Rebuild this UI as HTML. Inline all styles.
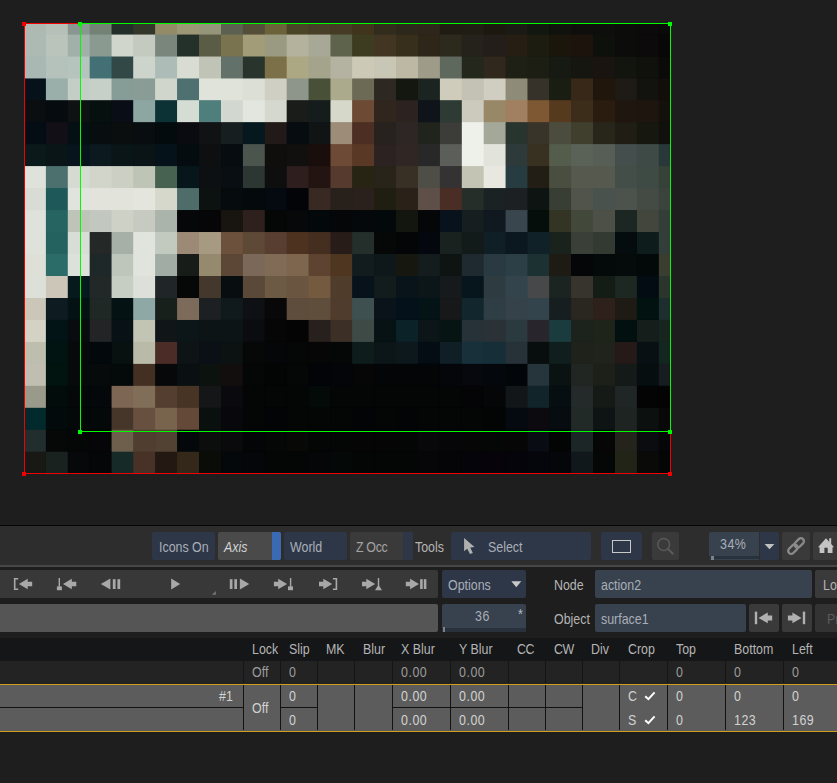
<!DOCTYPE html>
<html><head><meta charset="utf-8"><title>Action</title>
<style>
html,body{margin:0;padding:0;}
body{width:837px;height:783px;overflow:hidden;background:#1e1e1e;position:relative;font-family:"Liberation Sans",sans-serif;font-size:14.2px;color:#b4b4b4;}
.a{position:absolute;}
.t{position:absolute;white-space:nowrap;transform:scaleX(0.875);transform-origin:0 50%;line-height:16px;height:16px;margin-top:1.4px;}
.tr{transform-origin:100% 50%;text-align:right;}
.b{position:absolute;border-radius:2px;}
.blue{background:#2d3748;}
.slate{background:#37424e;}
.gray{background:#3a3a3a;}
svg{position:absolute;overflow:visible;}
</style></head><body>

<svg class="a" style="left:0;top:0" width="837" height="500" viewBox="0 0 837 500">
<g shape-rendering="crispEdges">
<rect x="24.0" y="23.5" width="22.5" height="11.6" fill="#adb9b1"/>
<rect x="45.9" y="23.5" width="22.5" height="11.6" fill="#b6c0b8"/>
<rect x="67.8" y="23.5" width="22.5" height="11.6" fill="#8a9690"/>
<rect x="89.7" y="23.5" width="22.5" height="11.6" fill="#748276"/>
<rect x="111.6" y="23.5" width="22.5" height="11.6" fill="#232e2b"/>
<rect x="133.4" y="23.5" width="22.5" height="11.6" fill="#33372a"/>
<rect x="155.3" y="23.5" width="22.5" height="11.6" fill="#928b66"/>
<rect x="177.2" y="23.5" width="22.5" height="11.6" fill="#9c9876"/>
<rect x="199.1" y="23.5" width="22.5" height="11.6" fill="#95957a"/>
<rect x="221.0" y="23.5" width="22.5" height="11.6" fill="#5b6050"/>
<rect x="242.9" y="23.5" width="22.5" height="11.6" fill="#544d38"/>
<rect x="264.8" y="23.5" width="22.5" height="11.6" fill="#6b623a"/>
<rect x="286.7" y="23.5" width="22.5" height="11.6" fill="#4a4526"/>
<rect x="308.6" y="23.5" width="22.5" height="11.6" fill="#483f28"/>
<rect x="330.5" y="23.5" width="22.5" height="11.6" fill="#463c26"/>
<rect x="352.4" y="23.5" width="22.5" height="11.6" fill="#40351c"/>
<rect x="374.2" y="23.5" width="22.5" height="11.6" fill="#312c1c"/>
<rect x="396.1" y="23.5" width="22.5" height="11.6" fill="#2c281c"/>
<rect x="418.0" y="23.5" width="22.5" height="11.6" fill="#2e261a"/>
<rect x="439.9" y="23.5" width="22.5" height="11.6" fill="#201c14"/>
<rect x="461.8" y="23.5" width="22.5" height="11.6" fill="#201e14"/>
<rect x="483.7" y="23.5" width="22.5" height="11.6" fill="#1c1810"/>
<rect x="505.6" y="23.5" width="22.5" height="11.6" fill="#1c1a14"/>
<rect x="527.5" y="23.5" width="22.5" height="11.6" fill="#121810"/>
<rect x="549.4" y="23.5" width="22.5" height="11.6" fill="#10120e"/>
<rect x="571.2" y="23.5" width="22.5" height="11.6" fill="#100e0c"/>
<rect x="593.1" y="23.5" width="22.5" height="11.6" fill="#0e0e0c"/>
<rect x="615.0" y="23.5" width="22.5" height="11.6" fill="#0c0c0a"/>
<rect x="636.9" y="23.5" width="22.5" height="11.6" fill="#0c0a0a"/>
<rect x="658.8" y="23.5" width="12.3" height="11.6" fill="#0a0a08"/>
<rect x="24.0" y="34.5" width="22.5" height="22.6" fill="#acbab3"/>
<rect x="45.9" y="34.5" width="22.5" height="22.6" fill="#bac4bb"/>
<rect x="67.8" y="34.5" width="22.5" height="22.6" fill="#a2b0aa"/>
<rect x="89.7" y="34.5" width="22.5" height="22.6" fill="#8a9a90"/>
<rect x="111.6" y="34.5" width="22.5" height="22.6" fill="#d0d6cc"/>
<rect x="133.4" y="34.5" width="22.5" height="22.6" fill="#c4cabf"/>
<rect x="155.3" y="34.5" width="22.5" height="22.6" fill="#7a867c"/>
<rect x="177.2" y="34.5" width="22.5" height="22.6" fill="#24302a"/>
<rect x="199.1" y="34.5" width="22.5" height="22.6" fill="#5a5c45"/>
<rect x="221.0" y="34.5" width="22.5" height="22.6" fill="#7a7350"/>
<rect x="242.9" y="34.5" width="22.5" height="22.6" fill="#a29c78"/>
<rect x="264.8" y="34.5" width="22.5" height="22.6" fill="#9a9a80"/>
<rect x="286.7" y="34.5" width="22.5" height="22.6" fill="#b4b29c"/>
<rect x="308.6" y="34.5" width="22.5" height="22.6" fill="#a8a896"/>
<rect x="330.5" y="34.5" width="22.5" height="22.6" fill="#5e644c"/>
<rect x="352.4" y="34.5" width="22.5" height="22.6" fill="#3e3c20"/>
<rect x="374.2" y="34.5" width="22.5" height="22.6" fill="#423622"/>
<rect x="396.1" y="34.5" width="22.5" height="22.6" fill="#382e1c"/>
<rect x="418.0" y="34.5" width="22.5" height="22.6" fill="#2e2618"/>
<rect x="439.9" y="34.5" width="22.5" height="22.6" fill="#2c2a1c"/>
<rect x="461.8" y="34.5" width="22.5" height="22.6" fill="#24221a"/>
<rect x="483.7" y="34.5" width="22.5" height="22.6" fill="#241e1a"/>
<rect x="505.6" y="34.5" width="22.5" height="22.6" fill="#261e12"/>
<rect x="527.5" y="34.5" width="22.5" height="22.6" fill="#1c1c10"/>
<rect x="549.4" y="34.5" width="22.5" height="22.6" fill="#1a160c"/>
<rect x="571.2" y="34.5" width="22.5" height="22.6" fill="#1c140c"/>
<rect x="593.1" y="34.5" width="22.5" height="22.6" fill="#0e100c"/>
<rect x="615.0" y="34.5" width="22.5" height="22.6" fill="#0c0c0a"/>
<rect x="636.9" y="34.5" width="22.5" height="22.6" fill="#0c0a0a"/>
<rect x="658.8" y="34.5" width="12.3" height="22.6" fill="#080808"/>
<rect x="24.0" y="56.5" width="22.5" height="22.6" fill="#a8b8b2"/>
<rect x="45.9" y="56.5" width="22.5" height="22.6" fill="#b4c2bb"/>
<rect x="67.8" y="56.5" width="22.5" height="22.6" fill="#b6c4be"/>
<rect x="89.7" y="56.5" width="22.5" height="22.6" fill="#427074"/>
<rect x="111.6" y="56.5" width="22.5" height="22.6" fill="#314846"/>
<rect x="133.4" y="56.5" width="22.5" height="22.6" fill="#ccd4cc"/>
<rect x="155.3" y="56.5" width="22.5" height="22.6" fill="#adbcb6"/>
<rect x="177.2" y="56.5" width="22.5" height="22.6" fill="#d8dcd2"/>
<rect x="199.1" y="56.5" width="22.5" height="22.6" fill="#c0c4b6"/>
<rect x="221.0" y="56.5" width="22.5" height="22.6" fill="#63716b"/>
<rect x="242.9" y="56.5" width="22.5" height="22.6" fill="#28342c"/>
<rect x="264.8" y="56.5" width="22.5" height="22.6" fill="#7c7048"/>
<rect x="286.7" y="56.5" width="22.5" height="22.6" fill="#aca884"/>
<rect x="308.6" y="56.5" width="22.5" height="22.6" fill="#a4a48c"/>
<rect x="330.5" y="56.5" width="22.5" height="22.6" fill="#b4b2a0"/>
<rect x="352.4" y="56.5" width="22.5" height="22.6" fill="#cccab6"/>
<rect x="374.2" y="56.5" width="22.5" height="22.6" fill="#c8c6b4"/>
<rect x="396.1" y="56.5" width="22.5" height="22.6" fill="#bcb8a4"/>
<rect x="418.0" y="56.5" width="22.5" height="22.6" fill="#9e9c88"/>
<rect x="439.9" y="56.5" width="22.5" height="22.6" fill="#5e685c"/>
<rect x="461.8" y="56.5" width="22.5" height="22.6" fill="#24281c"/>
<rect x="483.7" y="56.5" width="22.5" height="22.6" fill="#30281c"/>
<rect x="505.6" y="56.5" width="22.5" height="22.6" fill="#1e2016"/>
<rect x="527.5" y="56.5" width="22.5" height="22.6" fill="#1c1e14"/>
<rect x="549.4" y="56.5" width="22.5" height="22.6" fill="#161a12"/>
<rect x="571.2" y="56.5" width="22.5" height="22.6" fill="#161610"/>
<rect x="593.1" y="56.5" width="22.5" height="22.6" fill="#1a1410"/>
<rect x="615.0" y="56.5" width="22.5" height="22.6" fill="#12140e"/>
<rect x="636.9" y="56.5" width="22.5" height="22.6" fill="#10100c"/>
<rect x="658.8" y="56.5" width="12.3" height="22.6" fill="#0a0a08"/>
<rect x="24.0" y="78.5" width="22.5" height="22.6" fill="#06111a"/>
<rect x="45.9" y="78.5" width="22.5" height="22.6" fill="#9aaeaa"/>
<rect x="67.8" y="78.5" width="22.5" height="22.6" fill="#c4cec6"/>
<rect x="89.7" y="78.5" width="22.5" height="22.6" fill="#c6d0c8"/>
<rect x="111.6" y="78.5" width="22.5" height="22.6" fill="#869c96"/>
<rect x="133.4" y="78.5" width="22.5" height="22.6" fill="#8a9c96"/>
<rect x="155.3" y="78.5" width="22.5" height="22.6" fill="#d0d6cc"/>
<rect x="177.2" y="78.5" width="22.5" height="22.6" fill="#4f7070"/>
<rect x="199.1" y="78.5" width="22.5" height="22.6" fill="#dfe3da"/>
<rect x="221.0" y="78.5" width="22.5" height="22.6" fill="#dfe3da"/>
<rect x="242.9" y="78.5" width="22.5" height="22.6" fill="#dcdfd6"/>
<rect x="264.8" y="78.5" width="22.5" height="22.6" fill="#cfcfc4"/>
<rect x="286.7" y="78.5" width="22.5" height="22.6" fill="#8e968c"/>
<rect x="308.6" y="78.5" width="22.5" height="22.6" fill="#485038"/>
<rect x="330.5" y="78.5" width="22.5" height="22.6" fill="#acaa8c"/>
<rect x="352.4" y="78.5" width="22.5" height="22.6" fill="#6c6a54"/>
<rect x="374.2" y="78.5" width="22.5" height="22.6" fill="#2e2822"/>
<rect x="396.1" y="78.5" width="22.5" height="22.6" fill="#141610"/>
<rect x="418.0" y="78.5" width="22.5" height="22.6" fill="#1c2422"/>
<rect x="439.9" y="78.5" width="22.5" height="22.6" fill="#d0ccbc"/>
<rect x="461.8" y="78.5" width="22.5" height="22.6" fill="#c4c2b4"/>
<rect x="483.7" y="78.5" width="22.5" height="22.6" fill="#d0cec0"/>
<rect x="505.6" y="78.5" width="22.5" height="22.6" fill="#8e8c78"/>
<rect x="527.5" y="78.5" width="22.5" height="22.6" fill="#36322a"/>
<rect x="549.4" y="78.5" width="22.5" height="22.6" fill="#1a1e12"/>
<rect x="571.2" y="78.5" width="22.5" height="22.6" fill="#382818"/>
<rect x="593.1" y="78.5" width="22.5" height="22.6" fill="#20160c"/>
<rect x="615.0" y="78.5" width="22.5" height="22.6" fill="#1e1a16"/>
<rect x="636.9" y="78.5" width="22.5" height="22.6" fill="#12120e"/>
<rect x="658.8" y="78.5" width="12.3" height="22.6" fill="#120e0a"/>
<rect x="24.0" y="100.4" width="22.5" height="22.6" fill="#0b0e10"/>
<rect x="45.9" y="100.4" width="22.5" height="22.6" fill="#050b0e"/>
<rect x="67.8" y="100.4" width="22.5" height="22.6" fill="#0e1213"/>
<rect x="89.7" y="100.4" width="22.5" height="22.6" fill="#06100f"/>
<rect x="111.6" y="100.4" width="22.5" height="22.6" fill="#080d16"/>
<rect x="133.4" y="100.4" width="22.5" height="22.6" fill="#8ea6a2"/>
<rect x="155.3" y="100.4" width="22.5" height="22.6" fill="#0c3236"/>
<rect x="177.2" y="100.4" width="22.5" height="22.6" fill="#d4dcd4"/>
<rect x="199.1" y="100.4" width="22.5" height="22.6" fill="#4f7f7d"/>
<rect x="221.0" y="100.4" width="22.5" height="22.6" fill="#d2d8d0"/>
<rect x="242.9" y="100.4" width="22.5" height="22.6" fill="#e2e6de"/>
<rect x="264.8" y="100.4" width="22.5" height="22.6" fill="#d4d8ce"/>
<rect x="286.7" y="100.4" width="22.5" height="22.6" fill="#1a1c1a"/>
<rect x="308.6" y="100.4" width="22.5" height="22.6" fill="#141c1c"/>
<rect x="330.5" y="100.4" width="22.5" height="22.6" fill="#d6d8ca"/>
<rect x="352.4" y="100.4" width="22.5" height="22.6" fill="#6c4a34"/>
<rect x="374.2" y="100.4" width="22.5" height="22.6" fill="#30261e"/>
<rect x="396.1" y="100.4" width="22.5" height="22.6" fill="#2c2220"/>
<rect x="418.0" y="100.4" width="22.5" height="22.6" fill="#0e141a"/>
<rect x="439.9" y="100.4" width="22.5" height="22.6" fill="#2e3a34"/>
<rect x="461.8" y="100.4" width="22.5" height="22.6" fill="#cccabc"/>
<rect x="483.7" y="100.4" width="22.5" height="22.6" fill="#988868"/>
<rect x="505.6" y="100.4" width="22.5" height="22.6" fill="#a08060"/>
<rect x="527.5" y="100.4" width="22.5" height="22.6" fill="#7e5832"/>
<rect x="549.4" y="100.4" width="22.5" height="22.6" fill="#563a1e"/>
<rect x="571.2" y="100.4" width="22.5" height="22.6" fill="#3c2c1a"/>
<rect x="593.1" y="100.4" width="22.5" height="22.6" fill="#2a1c0e"/>
<rect x="615.0" y="100.4" width="22.5" height="22.6" fill="#201610"/>
<rect x="636.9" y="100.4" width="22.5" height="22.6" fill="#1e160e"/>
<rect x="658.8" y="100.4" width="12.3" height="22.6" fill="#14100c"/>
<rect x="24.0" y="122.4" width="22.5" height="22.6" fill="#040c14"/>
<rect x="45.9" y="122.4" width="22.5" height="22.6" fill="#121016"/>
<rect x="67.8" y="122.4" width="22.5" height="22.6" fill="#051014"/>
<rect x="89.7" y="122.4" width="22.5" height="22.6" fill="#080e0f"/>
<rect x="111.6" y="122.4" width="22.5" height="22.6" fill="#0a0e0f"/>
<rect x="133.4" y="122.4" width="22.5" height="22.6" fill="#080e10"/>
<rect x="155.3" y="122.4" width="22.5" height="22.6" fill="#040b0d"/>
<rect x="177.2" y="122.4" width="22.5" height="22.6" fill="#0a0b10"/>
<rect x="199.1" y="122.4" width="22.5" height="22.6" fill="#111214"/>
<rect x="221.0" y="122.4" width="22.5" height="22.6" fill="#161e20"/>
<rect x="242.9" y="122.4" width="22.5" height="22.6" fill="#04181e"/>
<rect x="264.8" y="122.4" width="22.5" height="22.6" fill="#221a18"/>
<rect x="286.7" y="122.4" width="22.5" height="22.6" fill="#060c10"/>
<rect x="308.6" y="122.4" width="22.5" height="22.6" fill="#101414"/>
<rect x="330.5" y="122.4" width="22.5" height="22.6" fill="#9c8c78"/>
<rect x="352.4" y="122.4" width="22.5" height="22.6" fill="#4c2e22"/>
<rect x="374.2" y="122.4" width="22.5" height="22.6" fill="#28221e"/>
<rect x="396.1" y="122.4" width="22.5" height="22.6" fill="#2e2624"/>
<rect x="418.0" y="122.4" width="22.5" height="22.6" fill="#20241c"/>
<rect x="439.9" y="122.4" width="22.5" height="22.6" fill="#3c3c38"/>
<rect x="461.8" y="122.4" width="22.5" height="22.6" fill="#eef0ea"/>
<rect x="483.7" y="122.4" width="22.5" height="22.6" fill="#a4a898"/>
<rect x="505.6" y="122.4" width="22.5" height="22.6" fill="#28342e"/>
<rect x="527.5" y="122.4" width="22.5" height="22.6" fill="#38342a"/>
<rect x="549.4" y="122.4" width="22.5" height="22.6" fill="#4c4c3e"/>
<rect x="571.2" y="122.4" width="22.5" height="22.6" fill="#403e2c"/>
<rect x="593.1" y="122.4" width="22.5" height="22.6" fill="#28261a"/>
<rect x="615.0" y="122.4" width="22.5" height="22.6" fill="#201e14"/>
<rect x="636.9" y="122.4" width="22.5" height="22.6" fill="#161810"/>
<rect x="658.8" y="122.4" width="12.3" height="22.6" fill="#10100c"/>
<rect x="24.0" y="144.3" width="22.5" height="22.6" fill="#0a1a1a"/>
<rect x="45.9" y="144.3" width="22.5" height="22.6" fill="#0a1518"/>
<rect x="67.8" y="144.3" width="22.5" height="22.6" fill="#08141c"/>
<rect x="89.7" y="144.3" width="22.5" height="22.6" fill="#0c1a20"/>
<rect x="111.6" y="144.3" width="22.5" height="22.6" fill="#0a1518"/>
<rect x="133.4" y="144.3" width="22.5" height="22.6" fill="#0a1416"/>
<rect x="155.3" y="144.3" width="22.5" height="22.6" fill="#06121a"/>
<rect x="177.2" y="144.3" width="22.5" height="22.6" fill="#040c10"/>
<rect x="199.1" y="144.3" width="22.5" height="22.6" fill="#0e0f10"/>
<rect x="221.0" y="144.3" width="22.5" height="22.6" fill="#060c10"/>
<rect x="242.9" y="144.3" width="22.5" height="22.6" fill="#4c544e"/>
<rect x="264.8" y="144.3" width="22.5" height="22.6" fill="#100e0c"/>
<rect x="286.7" y="144.3" width="22.5" height="22.6" fill="#12100e"/>
<rect x="308.6" y="144.3" width="22.5" height="22.6" fill="#1a0e0c"/>
<rect x="330.5" y="144.3" width="22.5" height="22.6" fill="#6c4a36"/>
<rect x="352.4" y="144.3" width="22.5" height="22.6" fill="#5a3826"/>
<rect x="374.2" y="144.3" width="22.5" height="22.6" fill="#2c2222"/>
<rect x="396.1" y="144.3" width="22.5" height="22.6" fill="#302624"/>
<rect x="418.0" y="144.3" width="22.5" height="22.6" fill="#282828"/>
<rect x="439.9" y="144.3" width="22.5" height="22.6" fill="#5c5e5a"/>
<rect x="461.8" y="144.3" width="22.5" height="22.6" fill="#eef0ea"/>
<rect x="483.7" y="144.3" width="22.5" height="22.6" fill="#e2e4dc"/>
<rect x="505.6" y="144.3" width="22.5" height="22.6" fill="#2e3a3a"/>
<rect x="527.5" y="144.3" width="22.5" height="22.6" fill="#383020"/>
<rect x="549.4" y="144.3" width="22.5" height="22.6" fill="#545c4c"/>
<rect x="571.2" y="144.3" width="22.5" height="22.6" fill="#5a6258"/>
<rect x="593.1" y="144.3" width="22.5" height="22.6" fill="#565e56"/>
<rect x="615.0" y="144.3" width="22.5" height="22.6" fill="#444e4c"/>
<rect x="636.9" y="144.3" width="22.5" height="22.6" fill="#3e4a46"/>
<rect x="658.8" y="144.3" width="12.3" height="22.6" fill="#283838"/>
<rect x="24.0" y="166.3" width="22.5" height="22.6" fill="#dee2da"/>
<rect x="45.9" y="166.3" width="22.5" height="22.6" fill="#4c706e"/>
<rect x="67.8" y="166.3" width="22.5" height="22.6" fill="#d6dbd2"/>
<rect x="89.7" y="166.3" width="22.5" height="22.6" fill="#d2d6ca"/>
<rect x="111.6" y="166.3" width="22.5" height="22.6" fill="#ccd0c4"/>
<rect x="133.4" y="166.3" width="22.5" height="22.6" fill="#bec4b6"/>
<rect x="155.3" y="166.3" width="22.5" height="22.6" fill="#486252"/>
<rect x="177.2" y="166.3" width="22.5" height="22.6" fill="#06161a"/>
<rect x="199.1" y="166.3" width="22.5" height="22.6" fill="#0c1012"/>
<rect x="221.0" y="166.3" width="22.5" height="22.6" fill="#080e12"/>
<rect x="242.9" y="166.3" width="22.5" height="22.6" fill="#2c3632"/>
<rect x="264.8" y="166.3" width="22.5" height="22.6" fill="#0e0e0e"/>
<rect x="286.7" y="166.3" width="22.5" height="22.6" fill="#2e1e1e"/>
<rect x="308.6" y="166.3" width="22.5" height="22.6" fill="#221410"/>
<rect x="330.5" y="166.3" width="22.5" height="22.6" fill="#563a2e"/>
<rect x="352.4" y="166.3" width="22.5" height="22.6" fill="#282414"/>
<rect x="374.2" y="166.3" width="22.5" height="22.6" fill="#28241a"/>
<rect x="396.1" y="166.3" width="22.5" height="22.6" fill="#383024"/>
<rect x="418.0" y="166.3" width="22.5" height="22.6" fill="#4e4e46"/>
<rect x="439.9" y="166.3" width="22.5" height="22.6" fill="#343232"/>
<rect x="461.8" y="166.3" width="22.5" height="22.6" fill="#c4c4b4"/>
<rect x="483.7" y="166.3" width="22.5" height="22.6" fill="#e8e8e0"/>
<rect x="505.6" y="166.3" width="22.5" height="22.6" fill="#263c40"/>
<rect x="527.5" y="166.3" width="22.5" height="22.6" fill="#221e16"/>
<rect x="549.4" y="166.3" width="22.5" height="22.6" fill="#4a4e40"/>
<rect x="571.2" y="166.3" width="22.5" height="22.6" fill="#565a4e"/>
<rect x="593.1" y="166.3" width="22.5" height="22.6" fill="#565a4e"/>
<rect x="615.0" y="166.3" width="22.5" height="22.6" fill="#444e48"/>
<rect x="636.9" y="166.3" width="22.5" height="22.6" fill="#3e4a44"/>
<rect x="658.8" y="166.3" width="12.3" height="22.6" fill="#364238"/>
<rect x="24.0" y="188.2" width="22.5" height="22.6" fill="#d8dcd4"/>
<rect x="45.9" y="188.2" width="22.5" height="22.6" fill="#1e5858"/>
<rect x="67.8" y="188.2" width="22.5" height="22.6" fill="#e0e4dc"/>
<rect x="89.7" y="188.2" width="22.5" height="22.6" fill="#e2e4dc"/>
<rect x="111.6" y="188.2" width="22.5" height="22.6" fill="#e2e4dc"/>
<rect x="133.4" y="188.2" width="22.5" height="22.6" fill="#e4e6de"/>
<rect x="155.3" y="188.2" width="22.5" height="22.6" fill="#d6d8cc"/>
<rect x="177.2" y="188.2" width="22.5" height="22.6" fill="#4e6c6a"/>
<rect x="199.1" y="188.2" width="22.5" height="22.6" fill="#0c1210"/>
<rect x="221.0" y="188.2" width="22.5" height="22.6" fill="#060c0e"/>
<rect x="242.9" y="188.2" width="22.5" height="22.6" fill="#040a0c"/>
<rect x="264.8" y="188.2" width="22.5" height="22.6" fill="#040a10"/>
<rect x="286.7" y="188.2" width="22.5" height="22.6" fill="#020408"/>
<rect x="308.6" y="188.2" width="22.5" height="22.6" fill="#382a22"/>
<rect x="330.5" y="188.2" width="22.5" height="22.6" fill="#28201a"/>
<rect x="352.4" y="188.2" width="22.5" height="22.6" fill="#2a201c"/>
<rect x="374.2" y="188.2" width="22.5" height="22.6" fill="#201e10"/>
<rect x="396.1" y="188.2" width="22.5" height="22.6" fill="#2a2218"/>
<rect x="418.0" y="188.2" width="22.5" height="22.6" fill="#5e5048"/>
<rect x="439.9" y="188.2" width="22.5" height="22.6" fill="#4a2e26"/>
<rect x="461.8" y="188.2" width="22.5" height="22.6" fill="#262e2a"/>
<rect x="483.7" y="188.2" width="22.5" height="22.6" fill="#1a2224"/>
<rect x="505.6" y="188.2" width="22.5" height="22.6" fill="#1c2022"/>
<rect x="527.5" y="188.2" width="22.5" height="22.6" fill="#0e1412"/>
<rect x="549.4" y="188.2" width="22.5" height="22.6" fill="#383e34"/>
<rect x="571.2" y="188.2" width="22.5" height="22.6" fill="#50544a"/>
<rect x="593.1" y="188.2" width="22.5" height="22.6" fill="#4a524e"/>
<rect x="615.0" y="188.2" width="22.5" height="22.6" fill="#4c524c"/>
<rect x="636.9" y="188.2" width="22.5" height="22.6" fill="#444a44"/>
<rect x="658.8" y="188.2" width="12.3" height="22.6" fill="#3a443c"/>
<rect x="24.0" y="210.2" width="22.5" height="22.6" fill="#dee2da"/>
<rect x="45.9" y="210.2" width="22.5" height="22.6" fill="#266462"/>
<rect x="67.8" y="210.2" width="22.5" height="22.6" fill="#bec4b8"/>
<rect x="89.7" y="210.2" width="22.5" height="22.6" fill="#c2c8c0"/>
<rect x="111.6" y="210.2" width="22.5" height="22.6" fill="#ced2c6"/>
<rect x="133.4" y="210.2" width="22.5" height="22.6" fill="#c6cac0"/>
<rect x="155.3" y="210.2" width="22.5" height="22.6" fill="#aab4aa"/>
<rect x="177.2" y="210.2" width="22.5" height="22.6" fill="#050708"/>
<rect x="199.1" y="210.2" width="22.5" height="22.6" fill="#060608"/>
<rect x="221.0" y="210.2" width="22.5" height="22.6" fill="#181410"/>
<rect x="242.9" y="210.2" width="22.5" height="22.6" fill="#2e201c"/>
<rect x="264.8" y="210.2" width="22.5" height="22.6" fill="#050706"/>
<rect x="286.7" y="210.2" width="22.5" height="22.6" fill="#06080a"/>
<rect x="308.6" y="210.2" width="22.5" height="22.6" fill="#03080a"/>
<rect x="330.5" y="210.2" width="22.5" height="22.6" fill="#040608"/>
<rect x="352.4" y="210.2" width="22.5" height="22.6" fill="#04080a"/>
<rect x="374.2" y="210.2" width="22.5" height="22.6" fill="#03080a"/>
<rect x="396.1" y="210.2" width="22.5" height="22.6" fill="#12160e"/>
<rect x="418.0" y="210.2" width="22.5" height="22.6" fill="#050608"/>
<rect x="439.9" y="210.2" width="22.5" height="22.6" fill="#08121c"/>
<rect x="461.8" y="210.2" width="22.5" height="22.6" fill="#161e20"/>
<rect x="483.7" y="210.2" width="22.5" height="22.6" fill="#101820"/>
<rect x="505.6" y="210.2" width="22.5" height="22.6" fill="#3a464e"/>
<rect x="527.5" y="210.2" width="22.5" height="22.6" fill="#060e0c"/>
<rect x="549.4" y="210.2" width="22.5" height="22.6" fill="#343424"/>
<rect x="571.2" y="210.2" width="22.5" height="22.6" fill="#42483a"/>
<rect x="593.1" y="210.2" width="22.5" height="22.6" fill="#4c5046"/>
<rect x="615.0" y="210.2" width="22.5" height="22.6" fill="#1c2622"/>
<rect x="636.9" y="210.2" width="22.5" height="22.6" fill="#42463c"/>
<rect x="658.8" y="210.2" width="12.3" height="22.6" fill="#343e38"/>
<rect x="24.0" y="232.2" width="22.5" height="22.6" fill="#dee2da"/>
<rect x="45.9" y="232.2" width="22.5" height="22.6" fill="#246260"/>
<rect x="67.8" y="232.2" width="22.5" height="22.6" fill="#d8ded6"/>
<rect x="89.7" y="232.2" width="22.5" height="22.6" fill="#242826"/>
<rect x="111.6" y="232.2" width="22.5" height="22.6" fill="#a6b0a6"/>
<rect x="133.4" y="232.2" width="22.5" height="22.6" fill="#e0e4dc"/>
<rect x="155.3" y="232.2" width="22.5" height="22.6" fill="#c2cac0"/>
<rect x="177.2" y="232.2" width="22.5" height="22.6" fill="#9c8a76"/>
<rect x="199.1" y="232.2" width="22.5" height="22.6" fill="#a69a82"/>
<rect x="221.0" y="232.2" width="22.5" height="22.6" fill="#6c523c"/>
<rect x="242.9" y="232.2" width="22.5" height="22.6" fill="#5e4836"/>
<rect x="264.8" y="232.2" width="22.5" height="22.6" fill="#583e30"/>
<rect x="286.7" y="232.2" width="22.5" height="22.6" fill="#4e3220"/>
<rect x="308.6" y="232.2" width="22.5" height="22.6" fill="#442e20"/>
<rect x="330.5" y="232.2" width="22.5" height="22.6" fill="#281c18"/>
<rect x="352.4" y="232.2" width="22.5" height="22.6" fill="#242e2a"/>
<rect x="374.2" y="232.2" width="22.5" height="22.6" fill="#060808"/>
<rect x="396.1" y="232.2" width="22.5" height="22.6" fill="#030506"/>
<rect x="418.0" y="232.2" width="22.5" height="22.6" fill="#04080e"/>
<rect x="439.9" y="232.2" width="22.5" height="22.6" fill="#1a2220"/>
<rect x="461.8" y="232.2" width="22.5" height="22.6" fill="#121a1a"/>
<rect x="483.7" y="232.2" width="22.5" height="22.6" fill="#101e26"/>
<rect x="505.6" y="232.2" width="22.5" height="22.6" fill="#0c1820"/>
<rect x="527.5" y="232.2" width="22.5" height="22.6" fill="#102228"/>
<rect x="549.4" y="232.2" width="22.5" height="22.6" fill="#1a221e"/>
<rect x="571.2" y="232.2" width="22.5" height="22.6" fill="#3a4038"/>
<rect x="593.1" y="232.2" width="22.5" height="22.6" fill="#323a32"/>
<rect x="615.0" y="232.2" width="22.5" height="22.6" fill="#040c0e"/>
<rect x="636.9" y="232.2" width="22.5" height="22.6" fill="#0e1c1c"/>
<rect x="658.8" y="232.2" width="12.3" height="22.6" fill="#323e3a"/>
<rect x="24.0" y="254.1" width="22.5" height="22.6" fill="#dee0d8"/>
<rect x="45.9" y="254.1" width="22.5" height="22.6" fill="#2c6c68"/>
<rect x="67.8" y="254.1" width="22.5" height="22.6" fill="#dce2da"/>
<rect x="89.7" y="254.1" width="22.5" height="22.6" fill="#1e2828"/>
<rect x="111.6" y="254.1" width="22.5" height="22.6" fill="#bec6bc"/>
<rect x="133.4" y="254.1" width="22.5" height="22.6" fill="#e0e4dc"/>
<rect x="155.3" y="254.1" width="22.5" height="22.6" fill="#a0aca4"/>
<rect x="177.2" y="254.1" width="22.5" height="22.6" fill="#181c18"/>
<rect x="199.1" y="254.1" width="22.5" height="22.6" fill="#968a6e"/>
<rect x="221.0" y="254.1" width="22.5" height="22.6" fill="#5c4636"/>
<rect x="242.9" y="254.1" width="22.5" height="22.6" fill="#7c6858"/>
<rect x="264.8" y="254.1" width="22.5" height="22.6" fill="#806c56"/>
<rect x="286.7" y="254.1" width="22.5" height="22.6" fill="#7e664e"/>
<rect x="308.6" y="254.1" width="22.5" height="22.6" fill="#5e4430"/>
<rect x="330.5" y="254.1" width="22.5" height="22.6" fill="#4e3620"/>
<rect x="352.4" y="254.1" width="22.5" height="22.6" fill="#121c1e"/>
<rect x="374.2" y="254.1" width="22.5" height="22.6" fill="#0e181a"/>
<rect x="396.1" y="254.1" width="22.5" height="22.6" fill="#161810"/>
<rect x="418.0" y="254.1" width="22.5" height="22.6" fill="#141c1e"/>
<rect x="439.9" y="254.1" width="22.5" height="22.6" fill="#0e1412"/>
<rect x="461.8" y="254.1" width="22.5" height="22.6" fill="#1e2a30"/>
<rect x="483.7" y="254.1" width="22.5" height="22.6" fill="#2a3a42"/>
<rect x="505.6" y="254.1" width="22.5" height="22.6" fill="#2c3e46"/>
<rect x="527.5" y="254.1" width="22.5" height="22.6" fill="#1c3232"/>
<rect x="549.4" y="254.1" width="22.5" height="22.6" fill="#1e1a14"/>
<rect x="571.2" y="254.1" width="22.5" height="22.6" fill="#040608"/>
<rect x="593.1" y="254.1" width="22.5" height="22.6" fill="#040a0a"/>
<rect x="615.0" y="254.1" width="22.5" height="22.6" fill="#050b0a"/>
<rect x="636.9" y="254.1" width="22.5" height="22.6" fill="#030809"/>
<rect x="658.8" y="254.1" width="12.3" height="22.6" fill="#3a3e30"/>
<rect x="24.0" y="276.1" width="22.5" height="22.6" fill="#dde0d8"/>
<rect x="45.9" y="276.1" width="22.5" height="22.6" fill="#ccc6b8"/>
<rect x="67.8" y="276.1" width="22.5" height="22.6" fill="#061a1e"/>
<rect x="89.7" y="276.1" width="22.5" height="22.6" fill="#222828"/>
<rect x="111.6" y="276.1" width="22.5" height="22.6" fill="#c6cec4"/>
<rect x="133.4" y="276.1" width="22.5" height="22.6" fill="#dce0d8"/>
<rect x="155.3" y="276.1" width="22.5" height="22.6" fill="#202628"/>
<rect x="177.2" y="276.1" width="22.5" height="22.6" fill="#060808"/>
<rect x="199.1" y="276.1" width="22.5" height="22.6" fill="#44382c"/>
<rect x="221.0" y="276.1" width="22.5" height="22.6" fill="#080e10"/>
<rect x="242.9" y="276.1" width="22.5" height="22.6" fill="#5a4838"/>
<rect x="264.8" y="276.1" width="22.5" height="22.6" fill="#6c5a44"/>
<rect x="286.7" y="276.1" width="22.5" height="22.6" fill="#6a5640"/>
<rect x="308.6" y="276.1" width="22.5" height="22.6" fill="#745a3e"/>
<rect x="330.5" y="276.1" width="22.5" height="22.6" fill="#503c2a"/>
<rect x="352.4" y="276.1" width="22.5" height="22.6" fill="#08121a"/>
<rect x="374.2" y="276.1" width="22.5" height="22.6" fill="#121c1c"/>
<rect x="396.1" y="276.1" width="22.5" height="22.6" fill="#08141a"/>
<rect x="418.0" y="276.1" width="22.5" height="22.6" fill="#0c1618"/>
<rect x="439.9" y="276.1" width="22.5" height="22.6" fill="#161a1c"/>
<rect x="461.8" y="276.1" width="22.5" height="22.6" fill="#06161c"/>
<rect x="483.7" y="276.1" width="22.5" height="22.6" fill="#2e3c42"/>
<rect x="505.6" y="276.1" width="22.5" height="22.6" fill="#34444c"/>
<rect x="527.5" y="276.1" width="22.5" height="22.6" fill="#46484a"/>
<rect x="549.4" y="276.1" width="22.5" height="22.6" fill="#1c2422"/>
<rect x="571.2" y="276.1" width="22.5" height="22.6" fill="#36342c"/>
<rect x="593.1" y="276.1" width="22.5" height="22.6" fill="#141c16"/>
<rect x="615.0" y="276.1" width="22.5" height="22.6" fill="#1e2822"/>
<rect x="636.9" y="276.1" width="22.5" height="22.6" fill="#030c12"/>
<rect x="658.8" y="276.1" width="12.3" height="22.6" fill="#2a362c"/>
<rect x="24.0" y="298.0" width="22.5" height="22.6" fill="#cac6b8"/>
<rect x="45.9" y="298.0" width="22.5" height="22.6" fill="#0e1c22"/>
<rect x="67.8" y="298.0" width="22.5" height="22.6" fill="#041214"/>
<rect x="89.7" y="298.0" width="22.5" height="22.6" fill="#202826"/>
<rect x="111.6" y="298.0" width="22.5" height="22.6" fill="#041214"/>
<rect x="133.4" y="298.0" width="22.5" height="22.6" fill="#8ea8a6"/>
<rect x="155.3" y="298.0" width="22.5" height="22.6" fill="#18201c"/>
<rect x="177.2" y="298.0" width="22.5" height="22.6" fill="#7c6a5a"/>
<rect x="199.1" y="298.0" width="22.5" height="22.6" fill="#1c2022"/>
<rect x="221.0" y="298.0" width="22.5" height="22.6" fill="#101a1c"/>
<rect x="242.9" y="298.0" width="22.5" height="22.6" fill="#0e1014"/>
<rect x="264.8" y="298.0" width="22.5" height="22.6" fill="#080808"/>
<rect x="286.7" y="298.0" width="22.5" height="22.6" fill="#5e4c3c"/>
<rect x="308.6" y="298.0" width="22.5" height="22.6" fill="#604e3c"/>
<rect x="330.5" y="298.0" width="22.5" height="22.6" fill="#503c2c"/>
<rect x="352.4" y="298.0" width="22.5" height="22.6" fill="#3e5050"/>
<rect x="374.2" y="298.0" width="22.5" height="22.6" fill="#0a121a"/>
<rect x="396.1" y="298.0" width="22.5" height="22.6" fill="#04101a"/>
<rect x="418.0" y="298.0" width="22.5" height="22.6" fill="#041416"/>
<rect x="439.9" y="298.0" width="22.5" height="22.6" fill="#16181a"/>
<rect x="461.8" y="298.0" width="22.5" height="22.6" fill="#12262e"/>
<rect x="483.7" y="298.0" width="22.5" height="22.6" fill="#2e3e44"/>
<rect x="505.6" y="298.0" width="22.5" height="22.6" fill="#36424a"/>
<rect x="527.5" y="298.0" width="22.5" height="22.6" fill="#34444c"/>
<rect x="549.4" y="298.0" width="22.5" height="22.6" fill="#161e20"/>
<rect x="571.2" y="298.0" width="22.5" height="22.6" fill="#2a2620"/>
<rect x="593.1" y="298.0" width="22.5" height="22.6" fill="#2e201a"/>
<rect x="615.0" y="298.0" width="22.5" height="22.6" fill="#1e1a14"/>
<rect x="636.9" y="298.0" width="22.5" height="22.6" fill="#021210"/>
<rect x="658.8" y="298.0" width="12.3" height="22.6" fill="#1e2e2e"/>
<rect x="24.0" y="320.0" width="22.5" height="22.6" fill="#d4d2c4"/>
<rect x="45.9" y="320.0" width="22.5" height="22.6" fill="#021416"/>
<rect x="67.8" y="320.0" width="22.5" height="22.6" fill="#080c0e"/>
<rect x="89.7" y="320.0" width="22.5" height="22.6" fill="#222426"/>
<rect x="111.6" y="320.0" width="22.5" height="22.6" fill="#081216"/>
<rect x="133.4" y="320.0" width="22.5" height="22.6" fill="#c2c4b4"/>
<rect x="155.3" y="320.0" width="22.5" height="22.6" fill="#101618"/>
<rect x="177.2" y="320.0" width="22.5" height="22.6" fill="#0c1618"/>
<rect x="199.1" y="320.0" width="22.5" height="22.6" fill="#0c1416"/>
<rect x="221.0" y="320.0" width="22.5" height="22.6" fill="#0c1416"/>
<rect x="242.9" y="320.0" width="22.5" height="22.6" fill="#0a0c10"/>
<rect x="264.8" y="320.0" width="22.5" height="22.6" fill="#060606"/>
<rect x="286.7" y="320.0" width="22.5" height="22.6" fill="#040404"/>
<rect x="308.6" y="320.0" width="22.5" height="22.6" fill="#28201c"/>
<rect x="330.5" y="320.0" width="22.5" height="22.6" fill="#3c3026"/>
<rect x="352.4" y="320.0" width="22.5" height="22.6" fill="#3e4a46"/>
<rect x="374.2" y="320.0" width="22.5" height="22.6" fill="#061214"/>
<rect x="396.1" y="320.0" width="22.5" height="22.6" fill="#0a2228"/>
<rect x="418.0" y="320.0" width="22.5" height="22.6" fill="#0c1618"/>
<rect x="439.9" y="320.0" width="22.5" height="22.6" fill="#061414"/>
<rect x="461.8" y="320.0" width="22.5" height="22.6" fill="#263238"/>
<rect x="483.7" y="320.0" width="22.5" height="22.6" fill="#2a3238"/>
<rect x="505.6" y="320.0" width="22.5" height="22.6" fill="#2a3a3e"/>
<rect x="527.5" y="320.0" width="22.5" height="22.6" fill="#28262c"/>
<rect x="549.4" y="320.0" width="22.5" height="22.6" fill="#1a3c3e"/>
<rect x="571.2" y="320.0" width="22.5" height="22.6" fill="#1c221c"/>
<rect x="593.1" y="320.0" width="22.5" height="22.6" fill="#1e241a"/>
<rect x="615.0" y="320.0" width="22.5" height="22.6" fill="#021010"/>
<rect x="636.9" y="320.0" width="22.5" height="22.6" fill="#161e1c"/>
<rect x="658.8" y="320.0" width="12.3" height="22.6" fill="#16261e"/>
<rect x="24.0" y="341.9" width="22.5" height="22.6" fill="#bebeae"/>
<rect x="45.9" y="341.9" width="22.5" height="22.6" fill="#021412"/>
<rect x="67.8" y="341.9" width="22.5" height="22.6" fill="#060a0a"/>
<rect x="89.7" y="341.9" width="22.5" height="22.6" fill="#02080c"/>
<rect x="111.6" y="341.9" width="22.5" height="22.6" fill="#081010"/>
<rect x="133.4" y="341.9" width="22.5" height="22.6" fill="#babaa8"/>
<rect x="155.3" y="341.9" width="22.5" height="22.6" fill="#4c2c26"/>
<rect x="177.2" y="341.9" width="22.5" height="22.6" fill="#0e1416"/>
<rect x="199.1" y="341.9" width="22.5" height="22.6" fill="#0a1016"/>
<rect x="221.0" y="341.9" width="22.5" height="22.6" fill="#0c1212"/>
<rect x="242.9" y="341.9" width="22.5" height="22.6" fill="#060808"/>
<rect x="264.8" y="341.9" width="22.5" height="22.6" fill="#040608"/>
<rect x="286.7" y="341.9" width="22.5" height="22.6" fill="#050606"/>
<rect x="308.6" y="341.9" width="22.5" height="22.6" fill="#060606"/>
<rect x="330.5" y="341.9" width="22.5" height="22.6" fill="#050606"/>
<rect x="352.4" y="341.9" width="22.5" height="22.6" fill="#0e1c1c"/>
<rect x="374.2" y="341.9" width="22.5" height="22.6" fill="#0c1618"/>
<rect x="396.1" y="341.9" width="22.5" height="22.6" fill="#0c181c"/>
<rect x="418.0" y="341.9" width="22.5" height="22.6" fill="#040c14"/>
<rect x="439.9" y="341.9" width="22.5" height="22.6" fill="#101e26"/>
<rect x="461.8" y="341.9" width="22.5" height="22.6" fill="#18303a"/>
<rect x="483.7" y="341.9" width="22.5" height="22.6" fill="#162e38"/>
<rect x="505.6" y="341.9" width="22.5" height="22.6" fill="#263238"/>
<rect x="527.5" y="341.9" width="22.5" height="22.6" fill="#080e0e"/>
<rect x="549.4" y="341.9" width="22.5" height="22.6" fill="#101e1e"/>
<rect x="571.2" y="341.9" width="22.5" height="22.6" fill="#1e221a"/>
<rect x="593.1" y="341.9" width="22.5" height="22.6" fill="#20221c"/>
<rect x="615.0" y="341.9" width="22.5" height="22.6" fill="#261a18"/>
<rect x="636.9" y="341.9" width="22.5" height="22.6" fill="#081014"/>
<rect x="658.8" y="341.9" width="12.3" height="22.6" fill="#142620"/>
<rect x="24.0" y="363.9" width="22.5" height="22.6" fill="#c0beb0"/>
<rect x="45.9" y="363.9" width="22.5" height="22.6" fill="#021410"/>
<rect x="67.8" y="363.9" width="22.5" height="22.6" fill="#060a0a"/>
<rect x="89.7" y="363.9" width="22.5" height="22.6" fill="#060a0a"/>
<rect x="111.6" y="363.9" width="22.5" height="22.6" fill="#040a0a"/>
<rect x="133.4" y="363.9" width="22.5" height="22.6" fill="#443022"/>
<rect x="155.3" y="363.9" width="22.5" height="22.6" fill="#06080a"/>
<rect x="177.2" y="363.9" width="22.5" height="22.6" fill="#0a1012"/>
<rect x="199.1" y="363.9" width="22.5" height="22.6" fill="#0c120e"/>
<rect x="221.0" y="363.9" width="22.5" height="22.6" fill="#120e0e"/>
<rect x="242.9" y="363.9" width="22.5" height="22.6" fill="#050706"/>
<rect x="264.8" y="363.9" width="22.5" height="22.6" fill="#030404"/>
<rect x="286.7" y="363.9" width="22.5" height="22.6" fill="#050606"/>
<rect x="308.6" y="363.9" width="22.5" height="22.6" fill="#020408"/>
<rect x="330.5" y="363.9" width="22.5" height="22.6" fill="#030508"/>
<rect x="352.4" y="363.9" width="22.5" height="22.6" fill="#060606"/>
<rect x="374.2" y="363.9" width="22.5" height="22.6" fill="#040506"/>
<rect x="396.1" y="363.9" width="22.5" height="22.6" fill="#040506"/>
<rect x="418.0" y="363.9" width="22.5" height="22.6" fill="#040506"/>
<rect x="439.9" y="363.9" width="22.5" height="22.6" fill="#04060a"/>
<rect x="461.8" y="363.9" width="22.5" height="22.6" fill="#06080e"/>
<rect x="483.7" y="363.9" width="22.5" height="22.6" fill="#04080c"/>
<rect x="505.6" y="363.9" width="22.5" height="22.6" fill="#020608"/>
<rect x="527.5" y="363.9" width="22.5" height="22.6" fill="#26343c"/>
<rect x="549.4" y="363.9" width="22.5" height="22.6" fill="#0a1212"/>
<rect x="571.2" y="363.9" width="22.5" height="22.6" fill="#222622"/>
<rect x="593.1" y="363.9" width="22.5" height="22.6" fill="#1c2018"/>
<rect x="615.0" y="363.9" width="22.5" height="22.6" fill="#141a18"/>
<rect x="636.9" y="363.9" width="22.5" height="22.6" fill="#060e10"/>
<rect x="658.8" y="363.9" width="12.3" height="22.6" fill="#161c20"/>
<rect x="24.0" y="385.8" width="22.5" height="22.6" fill="#9a9a8a"/>
<rect x="45.9" y="385.8" width="22.5" height="22.6" fill="#020c0a"/>
<rect x="67.8" y="385.8" width="22.5" height="22.6" fill="#040808"/>
<rect x="89.7" y="385.8" width="22.5" height="22.6" fill="#04080a"/>
<rect x="111.6" y="385.8" width="22.5" height="22.6" fill="#7e6654"/>
<rect x="133.4" y="385.8" width="22.5" height="22.6" fill="#806e58"/>
<rect x="155.3" y="385.8" width="22.5" height="22.6" fill="#543e30"/>
<rect x="177.2" y="385.8" width="22.5" height="22.6" fill="#483424"/>
<rect x="199.1" y="385.8" width="22.5" height="22.6" fill="#141618"/>
<rect x="221.0" y="385.8" width="22.5" height="22.6" fill="#0a0a0e"/>
<rect x="242.9" y="385.8" width="22.5" height="22.6" fill="#040606"/>
<rect x="264.8" y="385.8" width="22.5" height="22.6" fill="#040505"/>
<rect x="286.7" y="385.8" width="22.5" height="22.6" fill="#040606"/>
<rect x="308.6" y="385.8" width="22.5" height="22.6" fill="#040a08"/>
<rect x="330.5" y="385.8" width="22.5" height="22.6" fill="#040505"/>
<rect x="352.4" y="385.8" width="22.5" height="22.6" fill="#040505"/>
<rect x="374.2" y="385.8" width="22.5" height="22.6" fill="#040505"/>
<rect x="396.1" y="385.8" width="22.5" height="22.6" fill="#040505"/>
<rect x="418.0" y="385.8" width="22.5" height="22.6" fill="#040505"/>
<rect x="439.9" y="385.8" width="22.5" height="22.6" fill="#040505"/>
<rect x="461.8" y="385.8" width="22.5" height="22.6" fill="#040406"/>
<rect x="483.7" y="385.8" width="22.5" height="22.6" fill="#040608"/>
<rect x="505.6" y="385.8" width="22.5" height="22.6" fill="#121618"/>
<rect x="527.5" y="385.8" width="22.5" height="22.6" fill="#10242a"/>
<rect x="549.4" y="385.8" width="22.5" height="22.6" fill="#060e12"/>
<rect x="571.2" y="385.8" width="22.5" height="22.6" fill="#242a2a"/>
<rect x="593.1" y="385.8" width="22.5" height="22.6" fill="#161a16"/>
<rect x="615.0" y="385.8" width="22.5" height="22.6" fill="#202626"/>
<rect x="636.9" y="385.8" width="22.5" height="22.6" fill="#040404"/>
<rect x="658.8" y="385.8" width="12.3" height="22.6" fill="#040404"/>
<rect x="24.0" y="407.8" width="22.5" height="22.6" fill="#022a2c"/>
<rect x="45.9" y="407.8" width="22.5" height="22.6" fill="#020a0c"/>
<rect x="67.8" y="407.8" width="22.5" height="22.6" fill="#040808"/>
<rect x="89.7" y="407.8" width="22.5" height="22.6" fill="#050808"/>
<rect x="111.6" y="407.8" width="22.5" height="22.6" fill="#46362a"/>
<rect x="133.4" y="407.8" width="22.5" height="22.6" fill="#685040"/>
<rect x="155.3" y="407.8" width="22.5" height="22.6" fill="#78644c"/>
<rect x="177.2" y="407.8" width="22.5" height="22.6" fill="#644838"/>
<rect x="199.1" y="407.8" width="22.5" height="22.6" fill="#0a100e"/>
<rect x="221.0" y="407.8" width="22.5" height="22.6" fill="#08080c"/>
<rect x="242.9" y="407.8" width="22.5" height="22.6" fill="#040505"/>
<rect x="264.8" y="407.8" width="22.5" height="22.6" fill="#030405"/>
<rect x="286.7" y="407.8" width="22.5" height="22.6" fill="#040505"/>
<rect x="308.6" y="407.8" width="22.5" height="22.6" fill="#040505"/>
<rect x="330.5" y="407.8" width="22.5" height="22.6" fill="#040505"/>
<rect x="352.4" y="407.8" width="22.5" height="22.6" fill="#030405"/>
<rect x="374.2" y="407.8" width="22.5" height="22.6" fill="#040505"/>
<rect x="396.1" y="407.8" width="22.5" height="22.6" fill="#030405"/>
<rect x="418.0" y="407.8" width="22.5" height="22.6" fill="#040505"/>
<rect x="439.9" y="407.8" width="22.5" height="22.6" fill="#040505"/>
<rect x="461.8" y="407.8" width="22.5" height="22.6" fill="#040505"/>
<rect x="483.7" y="407.8" width="22.5" height="22.6" fill="#030505"/>
<rect x="505.6" y="407.8" width="22.5" height="22.6" fill="#040a10"/>
<rect x="527.5" y="407.8" width="22.5" height="22.6" fill="#0c0a0e"/>
<rect x="549.4" y="407.8" width="22.5" height="22.6" fill="#060c10"/>
<rect x="571.2" y="407.8" width="22.5" height="22.6" fill="#222a28"/>
<rect x="593.1" y="407.8" width="22.5" height="22.6" fill="#0e1414"/>
<rect x="615.0" y="407.8" width="22.5" height="22.6" fill="#1e2422"/>
<rect x="636.9" y="407.8" width="22.5" height="22.6" fill="#0c100e"/>
<rect x="658.8" y="407.8" width="12.3" height="22.6" fill="#080808"/>
<rect x="24.0" y="429.8" width="22.5" height="22.6" fill="#222e2e"/>
<rect x="45.9" y="429.8" width="22.5" height="22.6" fill="#060808"/>
<rect x="67.8" y="429.8" width="22.5" height="22.6" fill="#050706"/>
<rect x="89.7" y="429.8" width="22.5" height="22.6" fill="#060608"/>
<rect x="111.6" y="429.8" width="22.5" height="22.6" fill="#6e5e4c"/>
<rect x="133.4" y="429.8" width="22.5" height="22.6" fill="#503e30"/>
<rect x="155.3" y="429.8" width="22.5" height="22.6" fill="#524234"/>
<rect x="177.2" y="429.8" width="22.5" height="22.6" fill="#04080a"/>
<rect x="199.1" y="429.8" width="22.5" height="22.6" fill="#0c0e0e"/>
<rect x="221.0" y="429.8" width="22.5" height="22.6" fill="#0a0a0c"/>
<rect x="242.9" y="429.8" width="22.5" height="22.6" fill="#040506"/>
<rect x="264.8" y="429.8" width="22.5" height="22.6" fill="#050706"/>
<rect x="286.7" y="429.8" width="22.5" height="22.6" fill="#080806"/>
<rect x="308.6" y="429.8" width="22.5" height="22.6" fill="#040505"/>
<rect x="330.5" y="429.8" width="22.5" height="22.6" fill="#040505"/>
<rect x="352.4" y="429.8" width="22.5" height="22.6" fill="#050506"/>
<rect x="374.2" y="429.8" width="22.5" height="22.6" fill="#050506"/>
<rect x="396.1" y="429.8" width="22.5" height="22.6" fill="#040505"/>
<rect x="418.0" y="429.8" width="22.5" height="22.6" fill="#08080a"/>
<rect x="439.9" y="429.8" width="22.5" height="22.6" fill="#060608"/>
<rect x="461.8" y="429.8" width="22.5" height="22.6" fill="#060606"/>
<rect x="483.7" y="429.8" width="22.5" height="22.6" fill="#050706"/>
<rect x="505.6" y="429.8" width="22.5" height="22.6" fill="#060606"/>
<rect x="527.5" y="429.8" width="22.5" height="22.6" fill="#0a0c14"/>
<rect x="549.4" y="429.8" width="22.5" height="22.6" fill="#030404"/>
<rect x="571.2" y="429.8" width="22.5" height="22.6" fill="#1c2626"/>
<rect x="593.1" y="429.8" width="22.5" height="22.6" fill="#060606"/>
<rect x="615.0" y="429.8" width="22.5" height="22.6" fill="#24241c"/>
<rect x="636.9" y="429.8" width="22.5" height="22.6" fill="#0a0c10"/>
<rect x="658.8" y="429.8" width="12.3" height="22.6" fill="#040608"/>
<rect x="24.0" y="451.7" width="22.5" height="22.4" fill="#181814"/>
<rect x="45.9" y="451.7" width="22.5" height="22.4" fill="#1a2220"/>
<rect x="67.8" y="451.7" width="22.5" height="22.4" fill="#06080a"/>
<rect x="89.7" y="451.7" width="22.5" height="22.4" fill="#050608"/>
<rect x="111.6" y="451.7" width="22.5" height="22.4" fill="#162a28"/>
<rect x="133.4" y="451.7" width="22.5" height="22.4" fill="#483228"/>
<rect x="155.3" y="451.7" width="22.5" height="22.4" fill="#241812"/>
<rect x="177.2" y="451.7" width="22.5" height="22.4" fill="#34281a"/>
<rect x="199.1" y="451.7" width="22.5" height="22.4" fill="#0a0c08"/>
<rect x="221.0" y="451.7" width="22.5" height="22.4" fill="#04080a"/>
<rect x="242.9" y="451.7" width="22.5" height="22.4" fill="#04060a"/>
<rect x="264.8" y="451.7" width="22.5" height="22.4" fill="#040606"/>
<rect x="286.7" y="451.7" width="22.5" height="22.4" fill="#040606"/>
<rect x="308.6" y="451.7" width="22.5" height="22.4" fill="#040608"/>
<rect x="330.5" y="451.7" width="22.5" height="22.4" fill="#040806"/>
<rect x="352.4" y="451.7" width="22.5" height="22.4" fill="#040505"/>
<rect x="374.2" y="451.7" width="22.5" height="22.4" fill="#040505"/>
<rect x="396.1" y="451.7" width="22.5" height="22.4" fill="#040505"/>
<rect x="418.0" y="451.7" width="22.5" height="22.4" fill="#060608"/>
<rect x="439.9" y="451.7" width="22.5" height="22.4" fill="#050507"/>
<rect x="461.8" y="451.7" width="22.5" height="22.4" fill="#04040a"/>
<rect x="483.7" y="451.7" width="22.5" height="22.4" fill="#06040a"/>
<rect x="505.6" y="451.7" width="22.5" height="22.4" fill="#04040a"/>
<rect x="527.5" y="451.7" width="22.5" height="22.4" fill="#04060c"/>
<rect x="549.4" y="451.7" width="22.5" height="22.4" fill="#04060a"/>
<rect x="571.2" y="451.7" width="22.5" height="22.4" fill="#10181c"/>
<rect x="593.1" y="451.7" width="22.5" height="22.4" fill="#050706"/>
<rect x="615.0" y="451.7" width="22.5" height="22.4" fill="#222418"/>
<rect x="636.9" y="451.7" width="22.5" height="22.4" fill="#0a0a08"/>
<rect x="658.8" y="451.7" width="12.3" height="22.4" fill="#040606"/>
</g><g>
<rect x="24.00" y="23.50" width="21.89" height="11.05" fill="#adb9b1"/>
<rect x="45.89" y="23.50" width="21.89" height="11.05" fill="#b6c0b8"/>
<rect x="67.78" y="23.50" width="21.89" height="11.05" fill="#8a9690"/>
<rect x="89.67" y="23.50" width="21.89" height="11.05" fill="#748276"/>
<rect x="111.56" y="23.50" width="21.89" height="11.05" fill="#232e2b"/>
<rect x="133.45" y="23.50" width="21.89" height="11.05" fill="#33372a"/>
<rect x="155.34" y="23.50" width="21.89" height="11.05" fill="#928b66"/>
<rect x="177.23" y="23.50" width="21.89" height="11.05" fill="#9c9876"/>
<rect x="199.12" y="23.50" width="21.89" height="11.05" fill="#95957a"/>
<rect x="221.01" y="23.50" width="21.89" height="11.05" fill="#5b6050"/>
<rect x="242.90" y="23.50" width="21.89" height="11.05" fill="#544d38"/>
<rect x="264.79" y="23.50" width="21.89" height="11.05" fill="#6b623a"/>
<rect x="286.68" y="23.50" width="21.89" height="11.05" fill="#4a4526"/>
<rect x="308.57" y="23.50" width="21.89" height="11.05" fill="#483f28"/>
<rect x="330.46" y="23.50" width="21.89" height="11.05" fill="#463c26"/>
<rect x="352.35" y="23.50" width="21.89" height="11.05" fill="#40351c"/>
<rect x="374.24" y="23.50" width="21.89" height="11.05" fill="#312c1c"/>
<rect x="396.13" y="23.50" width="21.89" height="11.05" fill="#2c281c"/>
<rect x="418.02" y="23.50" width="21.89" height="11.05" fill="#2e261a"/>
<rect x="439.91" y="23.50" width="21.89" height="11.05" fill="#201c14"/>
<rect x="461.80" y="23.50" width="21.89" height="11.05" fill="#201e14"/>
<rect x="483.69" y="23.50" width="21.89" height="11.05" fill="#1c1810"/>
<rect x="505.58" y="23.50" width="21.89" height="11.05" fill="#1c1a14"/>
<rect x="527.47" y="23.50" width="21.89" height="11.05" fill="#121810"/>
<rect x="549.36" y="23.50" width="21.89" height="11.05" fill="#10120e"/>
<rect x="571.25" y="23.50" width="21.89" height="11.05" fill="#100e0c"/>
<rect x="593.14" y="23.50" width="21.89" height="11.05" fill="#0e0e0c"/>
<rect x="615.03" y="23.50" width="21.89" height="11.05" fill="#0c0c0a"/>
<rect x="636.92" y="23.50" width="21.89" height="11.05" fill="#0c0a0a"/>
<rect x="658.81" y="23.50" width="11.69" height="11.05" fill="#0a0a08"/>
<rect x="24.00" y="34.55" width="21.89" height="21.96" fill="#acbab3"/>
<rect x="45.89" y="34.55" width="21.89" height="21.96" fill="#bac4bb"/>
<rect x="67.78" y="34.55" width="21.89" height="21.96" fill="#a2b0aa"/>
<rect x="89.67" y="34.55" width="21.89" height="21.96" fill="#8a9a90"/>
<rect x="111.56" y="34.55" width="21.89" height="21.96" fill="#d0d6cc"/>
<rect x="133.45" y="34.55" width="21.89" height="21.96" fill="#c4cabf"/>
<rect x="155.34" y="34.55" width="21.89" height="21.96" fill="#7a867c"/>
<rect x="177.23" y="34.55" width="21.89" height="21.96" fill="#24302a"/>
<rect x="199.12" y="34.55" width="21.89" height="21.96" fill="#5a5c45"/>
<rect x="221.01" y="34.55" width="21.89" height="21.96" fill="#7a7350"/>
<rect x="242.90" y="34.55" width="21.89" height="21.96" fill="#a29c78"/>
<rect x="264.79" y="34.55" width="21.89" height="21.96" fill="#9a9a80"/>
<rect x="286.68" y="34.55" width="21.89" height="21.96" fill="#b4b29c"/>
<rect x="308.57" y="34.55" width="21.89" height="21.96" fill="#a8a896"/>
<rect x="330.46" y="34.55" width="21.89" height="21.96" fill="#5e644c"/>
<rect x="352.35" y="34.55" width="21.89" height="21.96" fill="#3e3c20"/>
<rect x="374.24" y="34.55" width="21.89" height="21.96" fill="#423622"/>
<rect x="396.13" y="34.55" width="21.89" height="21.96" fill="#382e1c"/>
<rect x="418.02" y="34.55" width="21.89" height="21.96" fill="#2e2618"/>
<rect x="439.91" y="34.55" width="21.89" height="21.96" fill="#2c2a1c"/>
<rect x="461.80" y="34.55" width="21.89" height="21.96" fill="#24221a"/>
<rect x="483.69" y="34.55" width="21.89" height="21.96" fill="#241e1a"/>
<rect x="505.58" y="34.55" width="21.89" height="21.96" fill="#261e12"/>
<rect x="527.47" y="34.55" width="21.89" height="21.96" fill="#1c1c10"/>
<rect x="549.36" y="34.55" width="21.89" height="21.96" fill="#1a160c"/>
<rect x="571.25" y="34.55" width="21.89" height="21.96" fill="#1c140c"/>
<rect x="593.14" y="34.55" width="21.89" height="21.96" fill="#0e100c"/>
<rect x="615.03" y="34.55" width="21.89" height="21.96" fill="#0c0c0a"/>
<rect x="636.92" y="34.55" width="21.89" height="21.96" fill="#0c0a0a"/>
<rect x="658.81" y="34.55" width="11.69" height="21.96" fill="#080808"/>
<rect x="24.00" y="56.51" width="21.89" height="21.96" fill="#a8b8b2"/>
<rect x="45.89" y="56.51" width="21.89" height="21.96" fill="#b4c2bb"/>
<rect x="67.78" y="56.51" width="21.89" height="21.96" fill="#b6c4be"/>
<rect x="89.67" y="56.51" width="21.89" height="21.96" fill="#427074"/>
<rect x="111.56" y="56.51" width="21.89" height="21.96" fill="#314846"/>
<rect x="133.45" y="56.51" width="21.89" height="21.96" fill="#ccd4cc"/>
<rect x="155.34" y="56.51" width="21.89" height="21.96" fill="#adbcb6"/>
<rect x="177.23" y="56.51" width="21.89" height="21.96" fill="#d8dcd2"/>
<rect x="199.12" y="56.51" width="21.89" height="21.96" fill="#c0c4b6"/>
<rect x="221.01" y="56.51" width="21.89" height="21.96" fill="#63716b"/>
<rect x="242.90" y="56.51" width="21.89" height="21.96" fill="#28342c"/>
<rect x="264.79" y="56.51" width="21.89" height="21.96" fill="#7c7048"/>
<rect x="286.68" y="56.51" width="21.89" height="21.96" fill="#aca884"/>
<rect x="308.57" y="56.51" width="21.89" height="21.96" fill="#a4a48c"/>
<rect x="330.46" y="56.51" width="21.89" height="21.96" fill="#b4b2a0"/>
<rect x="352.35" y="56.51" width="21.89" height="21.96" fill="#cccab6"/>
<rect x="374.24" y="56.51" width="21.89" height="21.96" fill="#c8c6b4"/>
<rect x="396.13" y="56.51" width="21.89" height="21.96" fill="#bcb8a4"/>
<rect x="418.02" y="56.51" width="21.89" height="21.96" fill="#9e9c88"/>
<rect x="439.91" y="56.51" width="21.89" height="21.96" fill="#5e685c"/>
<rect x="461.80" y="56.51" width="21.89" height="21.96" fill="#24281c"/>
<rect x="483.69" y="56.51" width="21.89" height="21.96" fill="#30281c"/>
<rect x="505.58" y="56.51" width="21.89" height="21.96" fill="#1e2016"/>
<rect x="527.47" y="56.51" width="21.89" height="21.96" fill="#1c1e14"/>
<rect x="549.36" y="56.51" width="21.89" height="21.96" fill="#161a12"/>
<rect x="571.25" y="56.51" width="21.89" height="21.96" fill="#161610"/>
<rect x="593.14" y="56.51" width="21.89" height="21.96" fill="#1a1410"/>
<rect x="615.03" y="56.51" width="21.89" height="21.96" fill="#12140e"/>
<rect x="636.92" y="56.51" width="21.89" height="21.96" fill="#10100c"/>
<rect x="658.81" y="56.51" width="11.69" height="21.96" fill="#0a0a08"/>
<rect x="24.00" y="78.46" width="21.89" height="21.96" fill="#06111a"/>
<rect x="45.89" y="78.46" width="21.89" height="21.96" fill="#9aaeaa"/>
<rect x="67.78" y="78.46" width="21.89" height="21.96" fill="#c4cec6"/>
<rect x="89.67" y="78.46" width="21.89" height="21.96" fill="#c6d0c8"/>
<rect x="111.56" y="78.46" width="21.89" height="21.96" fill="#869c96"/>
<rect x="133.45" y="78.46" width="21.89" height="21.96" fill="#8a9c96"/>
<rect x="155.34" y="78.46" width="21.89" height="21.96" fill="#d0d6cc"/>
<rect x="177.23" y="78.46" width="21.89" height="21.96" fill="#4f7070"/>
<rect x="199.12" y="78.46" width="21.89" height="21.96" fill="#dfe3da"/>
<rect x="221.01" y="78.46" width="21.89" height="21.96" fill="#dfe3da"/>
<rect x="242.90" y="78.46" width="21.89" height="21.96" fill="#dcdfd6"/>
<rect x="264.79" y="78.46" width="21.89" height="21.96" fill="#cfcfc4"/>
<rect x="286.68" y="78.46" width="21.89" height="21.96" fill="#8e968c"/>
<rect x="308.57" y="78.46" width="21.89" height="21.96" fill="#485038"/>
<rect x="330.46" y="78.46" width="21.89" height="21.96" fill="#acaa8c"/>
<rect x="352.35" y="78.46" width="21.89" height="21.96" fill="#6c6a54"/>
<rect x="374.24" y="78.46" width="21.89" height="21.96" fill="#2e2822"/>
<rect x="396.13" y="78.46" width="21.89" height="21.96" fill="#141610"/>
<rect x="418.02" y="78.46" width="21.89" height="21.96" fill="#1c2422"/>
<rect x="439.91" y="78.46" width="21.89" height="21.96" fill="#d0ccbc"/>
<rect x="461.80" y="78.46" width="21.89" height="21.96" fill="#c4c2b4"/>
<rect x="483.69" y="78.46" width="21.89" height="21.96" fill="#d0cec0"/>
<rect x="505.58" y="78.46" width="21.89" height="21.96" fill="#8e8c78"/>
<rect x="527.47" y="78.46" width="21.89" height="21.96" fill="#36322a"/>
<rect x="549.36" y="78.46" width="21.89" height="21.96" fill="#1a1e12"/>
<rect x="571.25" y="78.46" width="21.89" height="21.96" fill="#382818"/>
<rect x="593.14" y="78.46" width="21.89" height="21.96" fill="#20160c"/>
<rect x="615.03" y="78.46" width="21.89" height="21.96" fill="#1e1a16"/>
<rect x="636.92" y="78.46" width="21.89" height="21.96" fill="#12120e"/>
<rect x="658.81" y="78.46" width="11.69" height="21.96" fill="#120e0a"/>
<rect x="24.00" y="100.42" width="21.89" height="21.96" fill="#0b0e10"/>
<rect x="45.89" y="100.42" width="21.89" height="21.96" fill="#050b0e"/>
<rect x="67.78" y="100.42" width="21.89" height="21.96" fill="#0e1213"/>
<rect x="89.67" y="100.42" width="21.89" height="21.96" fill="#06100f"/>
<rect x="111.56" y="100.42" width="21.89" height="21.96" fill="#080d16"/>
<rect x="133.45" y="100.42" width="21.89" height="21.96" fill="#8ea6a2"/>
<rect x="155.34" y="100.42" width="21.89" height="21.96" fill="#0c3236"/>
<rect x="177.23" y="100.42" width="21.89" height="21.96" fill="#d4dcd4"/>
<rect x="199.12" y="100.42" width="21.89" height="21.96" fill="#4f7f7d"/>
<rect x="221.01" y="100.42" width="21.89" height="21.96" fill="#d2d8d0"/>
<rect x="242.90" y="100.42" width="21.89" height="21.96" fill="#e2e6de"/>
<rect x="264.79" y="100.42" width="21.89" height="21.96" fill="#d4d8ce"/>
<rect x="286.68" y="100.42" width="21.89" height="21.96" fill="#1a1c1a"/>
<rect x="308.57" y="100.42" width="21.89" height="21.96" fill="#141c1c"/>
<rect x="330.46" y="100.42" width="21.89" height="21.96" fill="#d6d8ca"/>
<rect x="352.35" y="100.42" width="21.89" height="21.96" fill="#6c4a34"/>
<rect x="374.24" y="100.42" width="21.89" height="21.96" fill="#30261e"/>
<rect x="396.13" y="100.42" width="21.89" height="21.96" fill="#2c2220"/>
<rect x="418.02" y="100.42" width="21.89" height="21.96" fill="#0e141a"/>
<rect x="439.91" y="100.42" width="21.89" height="21.96" fill="#2e3a34"/>
<rect x="461.80" y="100.42" width="21.89" height="21.96" fill="#cccabc"/>
<rect x="483.69" y="100.42" width="21.89" height="21.96" fill="#988868"/>
<rect x="505.58" y="100.42" width="21.89" height="21.96" fill="#a08060"/>
<rect x="527.47" y="100.42" width="21.89" height="21.96" fill="#7e5832"/>
<rect x="549.36" y="100.42" width="21.89" height="21.96" fill="#563a1e"/>
<rect x="571.25" y="100.42" width="21.89" height="21.96" fill="#3c2c1a"/>
<rect x="593.14" y="100.42" width="21.89" height="21.96" fill="#2a1c0e"/>
<rect x="615.03" y="100.42" width="21.89" height="21.96" fill="#201610"/>
<rect x="636.92" y="100.42" width="21.89" height="21.96" fill="#1e160e"/>
<rect x="658.81" y="100.42" width="11.69" height="21.96" fill="#14100c"/>
<rect x="24.00" y="122.37" width="21.89" height="21.96" fill="#040c14"/>
<rect x="45.89" y="122.37" width="21.89" height="21.96" fill="#121016"/>
<rect x="67.78" y="122.37" width="21.89" height="21.96" fill="#051014"/>
<rect x="89.67" y="122.37" width="21.89" height="21.96" fill="#080e0f"/>
<rect x="111.56" y="122.37" width="21.89" height="21.96" fill="#0a0e0f"/>
<rect x="133.45" y="122.37" width="21.89" height="21.96" fill="#080e10"/>
<rect x="155.34" y="122.37" width="21.89" height="21.96" fill="#040b0d"/>
<rect x="177.23" y="122.37" width="21.89" height="21.96" fill="#0a0b10"/>
<rect x="199.12" y="122.37" width="21.89" height="21.96" fill="#111214"/>
<rect x="221.01" y="122.37" width="21.89" height="21.96" fill="#161e20"/>
<rect x="242.90" y="122.37" width="21.89" height="21.96" fill="#04181e"/>
<rect x="264.79" y="122.37" width="21.89" height="21.96" fill="#221a18"/>
<rect x="286.68" y="122.37" width="21.89" height="21.96" fill="#060c10"/>
<rect x="308.57" y="122.37" width="21.89" height="21.96" fill="#101414"/>
<rect x="330.46" y="122.37" width="21.89" height="21.96" fill="#9c8c78"/>
<rect x="352.35" y="122.37" width="21.89" height="21.96" fill="#4c2e22"/>
<rect x="374.24" y="122.37" width="21.89" height="21.96" fill="#28221e"/>
<rect x="396.13" y="122.37" width="21.89" height="21.96" fill="#2e2624"/>
<rect x="418.02" y="122.37" width="21.89" height="21.96" fill="#20241c"/>
<rect x="439.91" y="122.37" width="21.89" height="21.96" fill="#3c3c38"/>
<rect x="461.80" y="122.37" width="21.89" height="21.96" fill="#eef0ea"/>
<rect x="483.69" y="122.37" width="21.89" height="21.96" fill="#a4a898"/>
<rect x="505.58" y="122.37" width="21.89" height="21.96" fill="#28342e"/>
<rect x="527.47" y="122.37" width="21.89" height="21.96" fill="#38342a"/>
<rect x="549.36" y="122.37" width="21.89" height="21.96" fill="#4c4c3e"/>
<rect x="571.25" y="122.37" width="21.89" height="21.96" fill="#403e2c"/>
<rect x="593.14" y="122.37" width="21.89" height="21.96" fill="#28261a"/>
<rect x="615.03" y="122.37" width="21.89" height="21.96" fill="#201e14"/>
<rect x="636.92" y="122.37" width="21.89" height="21.96" fill="#161810"/>
<rect x="658.81" y="122.37" width="11.69" height="21.96" fill="#10100c"/>
<rect x="24.00" y="144.33" width="21.89" height="21.96" fill="#0a1a1a"/>
<rect x="45.89" y="144.33" width="21.89" height="21.96" fill="#0a1518"/>
<rect x="67.78" y="144.33" width="21.89" height="21.96" fill="#08141c"/>
<rect x="89.67" y="144.33" width="21.89" height="21.96" fill="#0c1a20"/>
<rect x="111.56" y="144.33" width="21.89" height="21.96" fill="#0a1518"/>
<rect x="133.45" y="144.33" width="21.89" height="21.96" fill="#0a1416"/>
<rect x="155.34" y="144.33" width="21.89" height="21.96" fill="#06121a"/>
<rect x="177.23" y="144.33" width="21.89" height="21.96" fill="#040c10"/>
<rect x="199.12" y="144.33" width="21.89" height="21.96" fill="#0e0f10"/>
<rect x="221.01" y="144.33" width="21.89" height="21.96" fill="#060c10"/>
<rect x="242.90" y="144.33" width="21.89" height="21.96" fill="#4c544e"/>
<rect x="264.79" y="144.33" width="21.89" height="21.96" fill="#100e0c"/>
<rect x="286.68" y="144.33" width="21.89" height="21.96" fill="#12100e"/>
<rect x="308.57" y="144.33" width="21.89" height="21.96" fill="#1a0e0c"/>
<rect x="330.46" y="144.33" width="21.89" height="21.96" fill="#6c4a36"/>
<rect x="352.35" y="144.33" width="21.89" height="21.96" fill="#5a3826"/>
<rect x="374.24" y="144.33" width="21.89" height="21.96" fill="#2c2222"/>
<rect x="396.13" y="144.33" width="21.89" height="21.96" fill="#302624"/>
<rect x="418.02" y="144.33" width="21.89" height="21.96" fill="#282828"/>
<rect x="439.91" y="144.33" width="21.89" height="21.96" fill="#5c5e5a"/>
<rect x="461.80" y="144.33" width="21.89" height="21.96" fill="#eef0ea"/>
<rect x="483.69" y="144.33" width="21.89" height="21.96" fill="#e2e4dc"/>
<rect x="505.58" y="144.33" width="21.89" height="21.96" fill="#2e3a3a"/>
<rect x="527.47" y="144.33" width="21.89" height="21.96" fill="#383020"/>
<rect x="549.36" y="144.33" width="21.89" height="21.96" fill="#545c4c"/>
<rect x="571.25" y="144.33" width="21.89" height="21.96" fill="#5a6258"/>
<rect x="593.14" y="144.33" width="21.89" height="21.96" fill="#565e56"/>
<rect x="615.03" y="144.33" width="21.89" height="21.96" fill="#444e4c"/>
<rect x="636.92" y="144.33" width="21.89" height="21.96" fill="#3e4a46"/>
<rect x="658.81" y="144.33" width="11.69" height="21.96" fill="#283838"/>
<rect x="24.00" y="166.29" width="21.89" height="21.96" fill="#dee2da"/>
<rect x="45.89" y="166.29" width="21.89" height="21.96" fill="#4c706e"/>
<rect x="67.78" y="166.29" width="21.89" height="21.96" fill="#d6dbd2"/>
<rect x="89.67" y="166.29" width="21.89" height="21.96" fill="#d2d6ca"/>
<rect x="111.56" y="166.29" width="21.89" height="21.96" fill="#ccd0c4"/>
<rect x="133.45" y="166.29" width="21.89" height="21.96" fill="#bec4b6"/>
<rect x="155.34" y="166.29" width="21.89" height="21.96" fill="#486252"/>
<rect x="177.23" y="166.29" width="21.89" height="21.96" fill="#06161a"/>
<rect x="199.12" y="166.29" width="21.89" height="21.96" fill="#0c1012"/>
<rect x="221.01" y="166.29" width="21.89" height="21.96" fill="#080e12"/>
<rect x="242.90" y="166.29" width="21.89" height="21.96" fill="#2c3632"/>
<rect x="264.79" y="166.29" width="21.89" height="21.96" fill="#0e0e0e"/>
<rect x="286.68" y="166.29" width="21.89" height="21.96" fill="#2e1e1e"/>
<rect x="308.57" y="166.29" width="21.89" height="21.96" fill="#221410"/>
<rect x="330.46" y="166.29" width="21.89" height="21.96" fill="#563a2e"/>
<rect x="352.35" y="166.29" width="21.89" height="21.96" fill="#282414"/>
<rect x="374.24" y="166.29" width="21.89" height="21.96" fill="#28241a"/>
<rect x="396.13" y="166.29" width="21.89" height="21.96" fill="#383024"/>
<rect x="418.02" y="166.29" width="21.89" height="21.96" fill="#4e4e46"/>
<rect x="439.91" y="166.29" width="21.89" height="21.96" fill="#343232"/>
<rect x="461.80" y="166.29" width="21.89" height="21.96" fill="#c4c4b4"/>
<rect x="483.69" y="166.29" width="21.89" height="21.96" fill="#e8e8e0"/>
<rect x="505.58" y="166.29" width="21.89" height="21.96" fill="#263c40"/>
<rect x="527.47" y="166.29" width="21.89" height="21.96" fill="#221e16"/>
<rect x="549.36" y="166.29" width="21.89" height="21.96" fill="#4a4e40"/>
<rect x="571.25" y="166.29" width="21.89" height="21.96" fill="#565a4e"/>
<rect x="593.14" y="166.29" width="21.89" height="21.96" fill="#565a4e"/>
<rect x="615.03" y="166.29" width="21.89" height="21.96" fill="#444e48"/>
<rect x="636.92" y="166.29" width="21.89" height="21.96" fill="#3e4a44"/>
<rect x="658.81" y="166.29" width="11.69" height="21.96" fill="#364238"/>
<rect x="24.00" y="188.24" width="21.89" height="21.96" fill="#d8dcd4"/>
<rect x="45.89" y="188.24" width="21.89" height="21.96" fill="#1e5858"/>
<rect x="67.78" y="188.24" width="21.89" height="21.96" fill="#e0e4dc"/>
<rect x="89.67" y="188.24" width="21.89" height="21.96" fill="#e2e4dc"/>
<rect x="111.56" y="188.24" width="21.89" height="21.96" fill="#e2e4dc"/>
<rect x="133.45" y="188.24" width="21.89" height="21.96" fill="#e4e6de"/>
<rect x="155.34" y="188.24" width="21.89" height="21.96" fill="#d6d8cc"/>
<rect x="177.23" y="188.24" width="21.89" height="21.96" fill="#4e6c6a"/>
<rect x="199.12" y="188.24" width="21.89" height="21.96" fill="#0c1210"/>
<rect x="221.01" y="188.24" width="21.89" height="21.96" fill="#060c0e"/>
<rect x="242.90" y="188.24" width="21.89" height="21.96" fill="#040a0c"/>
<rect x="264.79" y="188.24" width="21.89" height="21.96" fill="#040a10"/>
<rect x="286.68" y="188.24" width="21.89" height="21.96" fill="#020408"/>
<rect x="308.57" y="188.24" width="21.89" height="21.96" fill="#382a22"/>
<rect x="330.46" y="188.24" width="21.89" height="21.96" fill="#28201a"/>
<rect x="352.35" y="188.24" width="21.89" height="21.96" fill="#2a201c"/>
<rect x="374.24" y="188.24" width="21.89" height="21.96" fill="#201e10"/>
<rect x="396.13" y="188.24" width="21.89" height="21.96" fill="#2a2218"/>
<rect x="418.02" y="188.24" width="21.89" height="21.96" fill="#5e5048"/>
<rect x="439.91" y="188.24" width="21.89" height="21.96" fill="#4a2e26"/>
<rect x="461.80" y="188.24" width="21.89" height="21.96" fill="#262e2a"/>
<rect x="483.69" y="188.24" width="21.89" height="21.96" fill="#1a2224"/>
<rect x="505.58" y="188.24" width="21.89" height="21.96" fill="#1c2022"/>
<rect x="527.47" y="188.24" width="21.89" height="21.96" fill="#0e1412"/>
<rect x="549.36" y="188.24" width="21.89" height="21.96" fill="#383e34"/>
<rect x="571.25" y="188.24" width="21.89" height="21.96" fill="#50544a"/>
<rect x="593.14" y="188.24" width="21.89" height="21.96" fill="#4a524e"/>
<rect x="615.03" y="188.24" width="21.89" height="21.96" fill="#4c524c"/>
<rect x="636.92" y="188.24" width="21.89" height="21.96" fill="#444a44"/>
<rect x="658.81" y="188.24" width="11.69" height="21.96" fill="#3a443c"/>
<rect x="24.00" y="210.20" width="21.89" height="21.96" fill="#dee2da"/>
<rect x="45.89" y="210.20" width="21.89" height="21.96" fill="#266462"/>
<rect x="67.78" y="210.20" width="21.89" height="21.96" fill="#bec4b8"/>
<rect x="89.67" y="210.20" width="21.89" height="21.96" fill="#c2c8c0"/>
<rect x="111.56" y="210.20" width="21.89" height="21.96" fill="#ced2c6"/>
<rect x="133.45" y="210.20" width="21.89" height="21.96" fill="#c6cac0"/>
<rect x="155.34" y="210.20" width="21.89" height="21.96" fill="#aab4aa"/>
<rect x="177.23" y="210.20" width="21.89" height="21.96" fill="#050708"/>
<rect x="199.12" y="210.20" width="21.89" height="21.96" fill="#060608"/>
<rect x="221.01" y="210.20" width="21.89" height="21.96" fill="#181410"/>
<rect x="242.90" y="210.20" width="21.89" height="21.96" fill="#2e201c"/>
<rect x="264.79" y="210.20" width="21.89" height="21.96" fill="#050706"/>
<rect x="286.68" y="210.20" width="21.89" height="21.96" fill="#06080a"/>
<rect x="308.57" y="210.20" width="21.89" height="21.96" fill="#03080a"/>
<rect x="330.46" y="210.20" width="21.89" height="21.96" fill="#040608"/>
<rect x="352.35" y="210.20" width="21.89" height="21.96" fill="#04080a"/>
<rect x="374.24" y="210.20" width="21.89" height="21.96" fill="#03080a"/>
<rect x="396.13" y="210.20" width="21.89" height="21.96" fill="#12160e"/>
<rect x="418.02" y="210.20" width="21.89" height="21.96" fill="#050608"/>
<rect x="439.91" y="210.20" width="21.89" height="21.96" fill="#08121c"/>
<rect x="461.80" y="210.20" width="21.89" height="21.96" fill="#161e20"/>
<rect x="483.69" y="210.20" width="21.89" height="21.96" fill="#101820"/>
<rect x="505.58" y="210.20" width="21.89" height="21.96" fill="#3a464e"/>
<rect x="527.47" y="210.20" width="21.89" height="21.96" fill="#060e0c"/>
<rect x="549.36" y="210.20" width="21.89" height="21.96" fill="#343424"/>
<rect x="571.25" y="210.20" width="21.89" height="21.96" fill="#42483a"/>
<rect x="593.14" y="210.20" width="21.89" height="21.96" fill="#4c5046"/>
<rect x="615.03" y="210.20" width="21.89" height="21.96" fill="#1c2622"/>
<rect x="636.92" y="210.20" width="21.89" height="21.96" fill="#42463c"/>
<rect x="658.81" y="210.20" width="11.69" height="21.96" fill="#343e38"/>
<rect x="24.00" y="232.15" width="21.89" height="21.96" fill="#dee2da"/>
<rect x="45.89" y="232.15" width="21.89" height="21.96" fill="#246260"/>
<rect x="67.78" y="232.15" width="21.89" height="21.96" fill="#d8ded6"/>
<rect x="89.67" y="232.15" width="21.89" height="21.96" fill="#242826"/>
<rect x="111.56" y="232.15" width="21.89" height="21.96" fill="#a6b0a6"/>
<rect x="133.45" y="232.15" width="21.89" height="21.96" fill="#e0e4dc"/>
<rect x="155.34" y="232.15" width="21.89" height="21.96" fill="#c2cac0"/>
<rect x="177.23" y="232.15" width="21.89" height="21.96" fill="#9c8a76"/>
<rect x="199.12" y="232.15" width="21.89" height="21.96" fill="#a69a82"/>
<rect x="221.01" y="232.15" width="21.89" height="21.96" fill="#6c523c"/>
<rect x="242.90" y="232.15" width="21.89" height="21.96" fill="#5e4836"/>
<rect x="264.79" y="232.15" width="21.89" height="21.96" fill="#583e30"/>
<rect x="286.68" y="232.15" width="21.89" height="21.96" fill="#4e3220"/>
<rect x="308.57" y="232.15" width="21.89" height="21.96" fill="#442e20"/>
<rect x="330.46" y="232.15" width="21.89" height="21.96" fill="#281c18"/>
<rect x="352.35" y="232.15" width="21.89" height="21.96" fill="#242e2a"/>
<rect x="374.24" y="232.15" width="21.89" height="21.96" fill="#060808"/>
<rect x="396.13" y="232.15" width="21.89" height="21.96" fill="#030506"/>
<rect x="418.02" y="232.15" width="21.89" height="21.96" fill="#04080e"/>
<rect x="439.91" y="232.15" width="21.89" height="21.96" fill="#1a2220"/>
<rect x="461.80" y="232.15" width="21.89" height="21.96" fill="#121a1a"/>
<rect x="483.69" y="232.15" width="21.89" height="21.96" fill="#101e26"/>
<rect x="505.58" y="232.15" width="21.89" height="21.96" fill="#0c1820"/>
<rect x="527.47" y="232.15" width="21.89" height="21.96" fill="#102228"/>
<rect x="549.36" y="232.15" width="21.89" height="21.96" fill="#1a221e"/>
<rect x="571.25" y="232.15" width="21.89" height="21.96" fill="#3a4038"/>
<rect x="593.14" y="232.15" width="21.89" height="21.96" fill="#323a32"/>
<rect x="615.03" y="232.15" width="21.89" height="21.96" fill="#040c0e"/>
<rect x="636.92" y="232.15" width="21.89" height="21.96" fill="#0e1c1c"/>
<rect x="658.81" y="232.15" width="11.69" height="21.96" fill="#323e3a"/>
<rect x="24.00" y="254.11" width="21.89" height="21.96" fill="#dee0d8"/>
<rect x="45.89" y="254.11" width="21.89" height="21.96" fill="#2c6c68"/>
<rect x="67.78" y="254.11" width="21.89" height="21.96" fill="#dce2da"/>
<rect x="89.67" y="254.11" width="21.89" height="21.96" fill="#1e2828"/>
<rect x="111.56" y="254.11" width="21.89" height="21.96" fill="#bec6bc"/>
<rect x="133.45" y="254.11" width="21.89" height="21.96" fill="#e0e4dc"/>
<rect x="155.34" y="254.11" width="21.89" height="21.96" fill="#a0aca4"/>
<rect x="177.23" y="254.11" width="21.89" height="21.96" fill="#181c18"/>
<rect x="199.12" y="254.11" width="21.89" height="21.96" fill="#968a6e"/>
<rect x="221.01" y="254.11" width="21.89" height="21.96" fill="#5c4636"/>
<rect x="242.90" y="254.11" width="21.89" height="21.96" fill="#7c6858"/>
<rect x="264.79" y="254.11" width="21.89" height="21.96" fill="#806c56"/>
<rect x="286.68" y="254.11" width="21.89" height="21.96" fill="#7e664e"/>
<rect x="308.57" y="254.11" width="21.89" height="21.96" fill="#5e4430"/>
<rect x="330.46" y="254.11" width="21.89" height="21.96" fill="#4e3620"/>
<rect x="352.35" y="254.11" width="21.89" height="21.96" fill="#121c1e"/>
<rect x="374.24" y="254.11" width="21.89" height="21.96" fill="#0e181a"/>
<rect x="396.13" y="254.11" width="21.89" height="21.96" fill="#161810"/>
<rect x="418.02" y="254.11" width="21.89" height="21.96" fill="#141c1e"/>
<rect x="439.91" y="254.11" width="21.89" height="21.96" fill="#0e1412"/>
<rect x="461.80" y="254.11" width="21.89" height="21.96" fill="#1e2a30"/>
<rect x="483.69" y="254.11" width="21.89" height="21.96" fill="#2a3a42"/>
<rect x="505.58" y="254.11" width="21.89" height="21.96" fill="#2c3e46"/>
<rect x="527.47" y="254.11" width="21.89" height="21.96" fill="#1c3232"/>
<rect x="549.36" y="254.11" width="21.89" height="21.96" fill="#1e1a14"/>
<rect x="571.25" y="254.11" width="21.89" height="21.96" fill="#040608"/>
<rect x="593.14" y="254.11" width="21.89" height="21.96" fill="#040a0a"/>
<rect x="615.03" y="254.11" width="21.89" height="21.96" fill="#050b0a"/>
<rect x="636.92" y="254.11" width="21.89" height="21.96" fill="#030809"/>
<rect x="658.81" y="254.11" width="11.69" height="21.96" fill="#3a3e30"/>
<rect x="24.00" y="276.07" width="21.89" height="21.96" fill="#dde0d8"/>
<rect x="45.89" y="276.07" width="21.89" height="21.96" fill="#ccc6b8"/>
<rect x="67.78" y="276.07" width="21.89" height="21.96" fill="#061a1e"/>
<rect x="89.67" y="276.07" width="21.89" height="21.96" fill="#222828"/>
<rect x="111.56" y="276.07" width="21.89" height="21.96" fill="#c6cec4"/>
<rect x="133.45" y="276.07" width="21.89" height="21.96" fill="#dce0d8"/>
<rect x="155.34" y="276.07" width="21.89" height="21.96" fill="#202628"/>
<rect x="177.23" y="276.07" width="21.89" height="21.96" fill="#060808"/>
<rect x="199.12" y="276.07" width="21.89" height="21.96" fill="#44382c"/>
<rect x="221.01" y="276.07" width="21.89" height="21.96" fill="#080e10"/>
<rect x="242.90" y="276.07" width="21.89" height="21.96" fill="#5a4838"/>
<rect x="264.79" y="276.07" width="21.89" height="21.96" fill="#6c5a44"/>
<rect x="286.68" y="276.07" width="21.89" height="21.96" fill="#6a5640"/>
<rect x="308.57" y="276.07" width="21.89" height="21.96" fill="#745a3e"/>
<rect x="330.46" y="276.07" width="21.89" height="21.96" fill="#503c2a"/>
<rect x="352.35" y="276.07" width="21.89" height="21.96" fill="#08121a"/>
<rect x="374.24" y="276.07" width="21.89" height="21.96" fill="#121c1c"/>
<rect x="396.13" y="276.07" width="21.89" height="21.96" fill="#08141a"/>
<rect x="418.02" y="276.07" width="21.89" height="21.96" fill="#0c1618"/>
<rect x="439.91" y="276.07" width="21.89" height="21.96" fill="#161a1c"/>
<rect x="461.80" y="276.07" width="21.89" height="21.96" fill="#06161c"/>
<rect x="483.69" y="276.07" width="21.89" height="21.96" fill="#2e3c42"/>
<rect x="505.58" y="276.07" width="21.89" height="21.96" fill="#34444c"/>
<rect x="527.47" y="276.07" width="21.89" height="21.96" fill="#46484a"/>
<rect x="549.36" y="276.07" width="21.89" height="21.96" fill="#1c2422"/>
<rect x="571.25" y="276.07" width="21.89" height="21.96" fill="#36342c"/>
<rect x="593.14" y="276.07" width="21.89" height="21.96" fill="#141c16"/>
<rect x="615.03" y="276.07" width="21.89" height="21.96" fill="#1e2822"/>
<rect x="636.92" y="276.07" width="21.89" height="21.96" fill="#030c12"/>
<rect x="658.81" y="276.07" width="11.69" height="21.96" fill="#2a362c"/>
<rect x="24.00" y="298.02" width="21.89" height="21.96" fill="#cac6b8"/>
<rect x="45.89" y="298.02" width="21.89" height="21.96" fill="#0e1c22"/>
<rect x="67.78" y="298.02" width="21.89" height="21.96" fill="#041214"/>
<rect x="89.67" y="298.02" width="21.89" height="21.96" fill="#202826"/>
<rect x="111.56" y="298.02" width="21.89" height="21.96" fill="#041214"/>
<rect x="133.45" y="298.02" width="21.89" height="21.96" fill="#8ea8a6"/>
<rect x="155.34" y="298.02" width="21.89" height="21.96" fill="#18201c"/>
<rect x="177.23" y="298.02" width="21.89" height="21.96" fill="#7c6a5a"/>
<rect x="199.12" y="298.02" width="21.89" height="21.96" fill="#1c2022"/>
<rect x="221.01" y="298.02" width="21.89" height="21.96" fill="#101a1c"/>
<rect x="242.90" y="298.02" width="21.89" height="21.96" fill="#0e1014"/>
<rect x="264.79" y="298.02" width="21.89" height="21.96" fill="#080808"/>
<rect x="286.68" y="298.02" width="21.89" height="21.96" fill="#5e4c3c"/>
<rect x="308.57" y="298.02" width="21.89" height="21.96" fill="#604e3c"/>
<rect x="330.46" y="298.02" width="21.89" height="21.96" fill="#503c2c"/>
<rect x="352.35" y="298.02" width="21.89" height="21.96" fill="#3e5050"/>
<rect x="374.24" y="298.02" width="21.89" height="21.96" fill="#0a121a"/>
<rect x="396.13" y="298.02" width="21.89" height="21.96" fill="#04101a"/>
<rect x="418.02" y="298.02" width="21.89" height="21.96" fill="#041416"/>
<rect x="439.91" y="298.02" width="21.89" height="21.96" fill="#16181a"/>
<rect x="461.80" y="298.02" width="21.89" height="21.96" fill="#12262e"/>
<rect x="483.69" y="298.02" width="21.89" height="21.96" fill="#2e3e44"/>
<rect x="505.58" y="298.02" width="21.89" height="21.96" fill="#36424a"/>
<rect x="527.47" y="298.02" width="21.89" height="21.96" fill="#34444c"/>
<rect x="549.36" y="298.02" width="21.89" height="21.96" fill="#161e20"/>
<rect x="571.25" y="298.02" width="21.89" height="21.96" fill="#2a2620"/>
<rect x="593.14" y="298.02" width="21.89" height="21.96" fill="#2e201a"/>
<rect x="615.03" y="298.02" width="21.89" height="21.96" fill="#1e1a14"/>
<rect x="636.92" y="298.02" width="21.89" height="21.96" fill="#021210"/>
<rect x="658.81" y="298.02" width="11.69" height="21.96" fill="#1e2e2e"/>
<rect x="24.00" y="319.98" width="21.89" height="21.96" fill="#d4d2c4"/>
<rect x="45.89" y="319.98" width="21.89" height="21.96" fill="#021416"/>
<rect x="67.78" y="319.98" width="21.89" height="21.96" fill="#080c0e"/>
<rect x="89.67" y="319.98" width="21.89" height="21.96" fill="#222426"/>
<rect x="111.56" y="319.98" width="21.89" height="21.96" fill="#081216"/>
<rect x="133.45" y="319.98" width="21.89" height="21.96" fill="#c2c4b4"/>
<rect x="155.34" y="319.98" width="21.89" height="21.96" fill="#101618"/>
<rect x="177.23" y="319.98" width="21.89" height="21.96" fill="#0c1618"/>
<rect x="199.12" y="319.98" width="21.89" height="21.96" fill="#0c1416"/>
<rect x="221.01" y="319.98" width="21.89" height="21.96" fill="#0c1416"/>
<rect x="242.90" y="319.98" width="21.89" height="21.96" fill="#0a0c10"/>
<rect x="264.79" y="319.98" width="21.89" height="21.96" fill="#060606"/>
<rect x="286.68" y="319.98" width="21.89" height="21.96" fill="#040404"/>
<rect x="308.57" y="319.98" width="21.89" height="21.96" fill="#28201c"/>
<rect x="330.46" y="319.98" width="21.89" height="21.96" fill="#3c3026"/>
<rect x="352.35" y="319.98" width="21.89" height="21.96" fill="#3e4a46"/>
<rect x="374.24" y="319.98" width="21.89" height="21.96" fill="#061214"/>
<rect x="396.13" y="319.98" width="21.89" height="21.96" fill="#0a2228"/>
<rect x="418.02" y="319.98" width="21.89" height="21.96" fill="#0c1618"/>
<rect x="439.91" y="319.98" width="21.89" height="21.96" fill="#061414"/>
<rect x="461.80" y="319.98" width="21.89" height="21.96" fill="#263238"/>
<rect x="483.69" y="319.98" width="21.89" height="21.96" fill="#2a3238"/>
<rect x="505.58" y="319.98" width="21.89" height="21.96" fill="#2a3a3e"/>
<rect x="527.47" y="319.98" width="21.89" height="21.96" fill="#28262c"/>
<rect x="549.36" y="319.98" width="21.89" height="21.96" fill="#1a3c3e"/>
<rect x="571.25" y="319.98" width="21.89" height="21.96" fill="#1c221c"/>
<rect x="593.14" y="319.98" width="21.89" height="21.96" fill="#1e241a"/>
<rect x="615.03" y="319.98" width="21.89" height="21.96" fill="#021010"/>
<rect x="636.92" y="319.98" width="21.89" height="21.96" fill="#161e1c"/>
<rect x="658.81" y="319.98" width="11.69" height="21.96" fill="#16261e"/>
<rect x="24.00" y="341.93" width="21.89" height="21.96" fill="#bebeae"/>
<rect x="45.89" y="341.93" width="21.89" height="21.96" fill="#021412"/>
<rect x="67.78" y="341.93" width="21.89" height="21.96" fill="#060a0a"/>
<rect x="89.67" y="341.93" width="21.89" height="21.96" fill="#02080c"/>
<rect x="111.56" y="341.93" width="21.89" height="21.96" fill="#081010"/>
<rect x="133.45" y="341.93" width="21.89" height="21.96" fill="#babaa8"/>
<rect x="155.34" y="341.93" width="21.89" height="21.96" fill="#4c2c26"/>
<rect x="177.23" y="341.93" width="21.89" height="21.96" fill="#0e1416"/>
<rect x="199.12" y="341.93" width="21.89" height="21.96" fill="#0a1016"/>
<rect x="221.01" y="341.93" width="21.89" height="21.96" fill="#0c1212"/>
<rect x="242.90" y="341.93" width="21.89" height="21.96" fill="#060808"/>
<rect x="264.79" y="341.93" width="21.89" height="21.96" fill="#040608"/>
<rect x="286.68" y="341.93" width="21.89" height="21.96" fill="#050606"/>
<rect x="308.57" y="341.93" width="21.89" height="21.96" fill="#060606"/>
<rect x="330.46" y="341.93" width="21.89" height="21.96" fill="#050606"/>
<rect x="352.35" y="341.93" width="21.89" height="21.96" fill="#0e1c1c"/>
<rect x="374.24" y="341.93" width="21.89" height="21.96" fill="#0c1618"/>
<rect x="396.13" y="341.93" width="21.89" height="21.96" fill="#0c181c"/>
<rect x="418.02" y="341.93" width="21.89" height="21.96" fill="#040c14"/>
<rect x="439.91" y="341.93" width="21.89" height="21.96" fill="#101e26"/>
<rect x="461.80" y="341.93" width="21.89" height="21.96" fill="#18303a"/>
<rect x="483.69" y="341.93" width="21.89" height="21.96" fill="#162e38"/>
<rect x="505.58" y="341.93" width="21.89" height="21.96" fill="#263238"/>
<rect x="527.47" y="341.93" width="21.89" height="21.96" fill="#080e0e"/>
<rect x="549.36" y="341.93" width="21.89" height="21.96" fill="#101e1e"/>
<rect x="571.25" y="341.93" width="21.89" height="21.96" fill="#1e221a"/>
<rect x="593.14" y="341.93" width="21.89" height="21.96" fill="#20221c"/>
<rect x="615.03" y="341.93" width="21.89" height="21.96" fill="#261a18"/>
<rect x="636.92" y="341.93" width="21.89" height="21.96" fill="#081014"/>
<rect x="658.81" y="341.93" width="11.69" height="21.96" fill="#142620"/>
<rect x="24.00" y="363.89" width="21.89" height="21.96" fill="#c0beb0"/>
<rect x="45.89" y="363.89" width="21.89" height="21.96" fill="#021410"/>
<rect x="67.78" y="363.89" width="21.89" height="21.96" fill="#060a0a"/>
<rect x="89.67" y="363.89" width="21.89" height="21.96" fill="#060a0a"/>
<rect x="111.56" y="363.89" width="21.89" height="21.96" fill="#040a0a"/>
<rect x="133.45" y="363.89" width="21.89" height="21.96" fill="#443022"/>
<rect x="155.34" y="363.89" width="21.89" height="21.96" fill="#06080a"/>
<rect x="177.23" y="363.89" width="21.89" height="21.96" fill="#0a1012"/>
<rect x="199.12" y="363.89" width="21.89" height="21.96" fill="#0c120e"/>
<rect x="221.01" y="363.89" width="21.89" height="21.96" fill="#120e0e"/>
<rect x="242.90" y="363.89" width="21.89" height="21.96" fill="#050706"/>
<rect x="264.79" y="363.89" width="21.89" height="21.96" fill="#030404"/>
<rect x="286.68" y="363.89" width="21.89" height="21.96" fill="#050606"/>
<rect x="308.57" y="363.89" width="21.89" height="21.96" fill="#020408"/>
<rect x="330.46" y="363.89" width="21.89" height="21.96" fill="#030508"/>
<rect x="352.35" y="363.89" width="21.89" height="21.96" fill="#060606"/>
<rect x="374.24" y="363.89" width="21.89" height="21.96" fill="#040506"/>
<rect x="396.13" y="363.89" width="21.89" height="21.96" fill="#040506"/>
<rect x="418.02" y="363.89" width="21.89" height="21.96" fill="#040506"/>
<rect x="439.91" y="363.89" width="21.89" height="21.96" fill="#04060a"/>
<rect x="461.80" y="363.89" width="21.89" height="21.96" fill="#06080e"/>
<rect x="483.69" y="363.89" width="21.89" height="21.96" fill="#04080c"/>
<rect x="505.58" y="363.89" width="21.89" height="21.96" fill="#020608"/>
<rect x="527.47" y="363.89" width="21.89" height="21.96" fill="#26343c"/>
<rect x="549.36" y="363.89" width="21.89" height="21.96" fill="#0a1212"/>
<rect x="571.25" y="363.89" width="21.89" height="21.96" fill="#222622"/>
<rect x="593.14" y="363.89" width="21.89" height="21.96" fill="#1c2018"/>
<rect x="615.03" y="363.89" width="21.89" height="21.96" fill="#141a18"/>
<rect x="636.92" y="363.89" width="21.89" height="21.96" fill="#060e10"/>
<rect x="658.81" y="363.89" width="11.69" height="21.96" fill="#161c20"/>
<rect x="24.00" y="385.85" width="21.89" height="21.96" fill="#9a9a8a"/>
<rect x="45.89" y="385.85" width="21.89" height="21.96" fill="#020c0a"/>
<rect x="67.78" y="385.85" width="21.89" height="21.96" fill="#040808"/>
<rect x="89.67" y="385.85" width="21.89" height="21.96" fill="#04080a"/>
<rect x="111.56" y="385.85" width="21.89" height="21.96" fill="#7e6654"/>
<rect x="133.45" y="385.85" width="21.89" height="21.96" fill="#806e58"/>
<rect x="155.34" y="385.85" width="21.89" height="21.96" fill="#543e30"/>
<rect x="177.23" y="385.85" width="21.89" height="21.96" fill="#483424"/>
<rect x="199.12" y="385.85" width="21.89" height="21.96" fill="#141618"/>
<rect x="221.01" y="385.85" width="21.89" height="21.96" fill="#0a0a0e"/>
<rect x="242.90" y="385.85" width="21.89" height="21.96" fill="#040606"/>
<rect x="264.79" y="385.85" width="21.89" height="21.96" fill="#040505"/>
<rect x="286.68" y="385.85" width="21.89" height="21.96" fill="#040606"/>
<rect x="308.57" y="385.85" width="21.89" height="21.96" fill="#040a08"/>
<rect x="330.46" y="385.85" width="21.89" height="21.96" fill="#040505"/>
<rect x="352.35" y="385.85" width="21.89" height="21.96" fill="#040505"/>
<rect x="374.24" y="385.85" width="21.89" height="21.96" fill="#040505"/>
<rect x="396.13" y="385.85" width="21.89" height="21.96" fill="#040505"/>
<rect x="418.02" y="385.85" width="21.89" height="21.96" fill="#040505"/>
<rect x="439.91" y="385.85" width="21.89" height="21.96" fill="#040505"/>
<rect x="461.80" y="385.85" width="21.89" height="21.96" fill="#040406"/>
<rect x="483.69" y="385.85" width="21.89" height="21.96" fill="#040608"/>
<rect x="505.58" y="385.85" width="21.89" height="21.96" fill="#121618"/>
<rect x="527.47" y="385.85" width="21.89" height="21.96" fill="#10242a"/>
<rect x="549.36" y="385.85" width="21.89" height="21.96" fill="#060e12"/>
<rect x="571.25" y="385.85" width="21.89" height="21.96" fill="#242a2a"/>
<rect x="593.14" y="385.85" width="21.89" height="21.96" fill="#161a16"/>
<rect x="615.03" y="385.85" width="21.89" height="21.96" fill="#202626"/>
<rect x="636.92" y="385.85" width="21.89" height="21.96" fill="#040404"/>
<rect x="658.81" y="385.85" width="11.69" height="21.96" fill="#040404"/>
<rect x="24.00" y="407.80" width="21.89" height="21.96" fill="#022a2c"/>
<rect x="45.89" y="407.80" width="21.89" height="21.96" fill="#020a0c"/>
<rect x="67.78" y="407.80" width="21.89" height="21.96" fill="#040808"/>
<rect x="89.67" y="407.80" width="21.89" height="21.96" fill="#050808"/>
<rect x="111.56" y="407.80" width="21.89" height="21.96" fill="#46362a"/>
<rect x="133.45" y="407.80" width="21.89" height="21.96" fill="#685040"/>
<rect x="155.34" y="407.80" width="21.89" height="21.96" fill="#78644c"/>
<rect x="177.23" y="407.80" width="21.89" height="21.96" fill="#644838"/>
<rect x="199.12" y="407.80" width="21.89" height="21.96" fill="#0a100e"/>
<rect x="221.01" y="407.80" width="21.89" height="21.96" fill="#08080c"/>
<rect x="242.90" y="407.80" width="21.89" height="21.96" fill="#040505"/>
<rect x="264.79" y="407.80" width="21.89" height="21.96" fill="#030405"/>
<rect x="286.68" y="407.80" width="21.89" height="21.96" fill="#040505"/>
<rect x="308.57" y="407.80" width="21.89" height="21.96" fill="#040505"/>
<rect x="330.46" y="407.80" width="21.89" height="21.96" fill="#040505"/>
<rect x="352.35" y="407.80" width="21.89" height="21.96" fill="#030405"/>
<rect x="374.24" y="407.80" width="21.89" height="21.96" fill="#040505"/>
<rect x="396.13" y="407.80" width="21.89" height="21.96" fill="#030405"/>
<rect x="418.02" y="407.80" width="21.89" height="21.96" fill="#040505"/>
<rect x="439.91" y="407.80" width="21.89" height="21.96" fill="#040505"/>
<rect x="461.80" y="407.80" width="21.89" height="21.96" fill="#040505"/>
<rect x="483.69" y="407.80" width="21.89" height="21.96" fill="#030505"/>
<rect x="505.58" y="407.80" width="21.89" height="21.96" fill="#040a10"/>
<rect x="527.47" y="407.80" width="21.89" height="21.96" fill="#0c0a0e"/>
<rect x="549.36" y="407.80" width="21.89" height="21.96" fill="#060c10"/>
<rect x="571.25" y="407.80" width="21.89" height="21.96" fill="#222a28"/>
<rect x="593.14" y="407.80" width="21.89" height="21.96" fill="#0e1414"/>
<rect x="615.03" y="407.80" width="21.89" height="21.96" fill="#1e2422"/>
<rect x="636.92" y="407.80" width="21.89" height="21.96" fill="#0c100e"/>
<rect x="658.81" y="407.80" width="11.69" height="21.96" fill="#080808"/>
<rect x="24.00" y="429.76" width="21.89" height="21.96" fill="#222e2e"/>
<rect x="45.89" y="429.76" width="21.89" height="21.96" fill="#060808"/>
<rect x="67.78" y="429.76" width="21.89" height="21.96" fill="#050706"/>
<rect x="89.67" y="429.76" width="21.89" height="21.96" fill="#060608"/>
<rect x="111.56" y="429.76" width="21.89" height="21.96" fill="#6e5e4c"/>
<rect x="133.45" y="429.76" width="21.89" height="21.96" fill="#503e30"/>
<rect x="155.34" y="429.76" width="21.89" height="21.96" fill="#524234"/>
<rect x="177.23" y="429.76" width="21.89" height="21.96" fill="#04080a"/>
<rect x="199.12" y="429.76" width="21.89" height="21.96" fill="#0c0e0e"/>
<rect x="221.01" y="429.76" width="21.89" height="21.96" fill="#0a0a0c"/>
<rect x="242.90" y="429.76" width="21.89" height="21.96" fill="#040506"/>
<rect x="264.79" y="429.76" width="21.89" height="21.96" fill="#050706"/>
<rect x="286.68" y="429.76" width="21.89" height="21.96" fill="#080806"/>
<rect x="308.57" y="429.76" width="21.89" height="21.96" fill="#040505"/>
<rect x="330.46" y="429.76" width="21.89" height="21.96" fill="#040505"/>
<rect x="352.35" y="429.76" width="21.89" height="21.96" fill="#050506"/>
<rect x="374.24" y="429.76" width="21.89" height="21.96" fill="#050506"/>
<rect x="396.13" y="429.76" width="21.89" height="21.96" fill="#040505"/>
<rect x="418.02" y="429.76" width="21.89" height="21.96" fill="#08080a"/>
<rect x="439.91" y="429.76" width="21.89" height="21.96" fill="#060608"/>
<rect x="461.80" y="429.76" width="21.89" height="21.96" fill="#060606"/>
<rect x="483.69" y="429.76" width="21.89" height="21.96" fill="#050706"/>
<rect x="505.58" y="429.76" width="21.89" height="21.96" fill="#060606"/>
<rect x="527.47" y="429.76" width="21.89" height="21.96" fill="#0a0c14"/>
<rect x="549.36" y="429.76" width="21.89" height="21.96" fill="#030404"/>
<rect x="571.25" y="429.76" width="21.89" height="21.96" fill="#1c2626"/>
<rect x="593.14" y="429.76" width="21.89" height="21.96" fill="#060606"/>
<rect x="615.03" y="429.76" width="21.89" height="21.96" fill="#24241c"/>
<rect x="636.92" y="429.76" width="21.89" height="21.96" fill="#0a0c10"/>
<rect x="658.81" y="429.76" width="11.69" height="21.96" fill="#040608"/>
<rect x="24.00" y="451.71" width="21.89" height="21.79" fill="#181814"/>
<rect x="45.89" y="451.71" width="21.89" height="21.79" fill="#1a2220"/>
<rect x="67.78" y="451.71" width="21.89" height="21.79" fill="#06080a"/>
<rect x="89.67" y="451.71" width="21.89" height="21.79" fill="#050608"/>
<rect x="111.56" y="451.71" width="21.89" height="21.79" fill="#162a28"/>
<rect x="133.45" y="451.71" width="21.89" height="21.79" fill="#483228"/>
<rect x="155.34" y="451.71" width="21.89" height="21.79" fill="#241812"/>
<rect x="177.23" y="451.71" width="21.89" height="21.79" fill="#34281a"/>
<rect x="199.12" y="451.71" width="21.89" height="21.79" fill="#0a0c08"/>
<rect x="221.01" y="451.71" width="21.89" height="21.79" fill="#04080a"/>
<rect x="242.90" y="451.71" width="21.89" height="21.79" fill="#04060a"/>
<rect x="264.79" y="451.71" width="21.89" height="21.79" fill="#040606"/>
<rect x="286.68" y="451.71" width="21.89" height="21.79" fill="#040606"/>
<rect x="308.57" y="451.71" width="21.89" height="21.79" fill="#040608"/>
<rect x="330.46" y="451.71" width="21.89" height="21.79" fill="#040806"/>
<rect x="352.35" y="451.71" width="21.89" height="21.79" fill="#040505"/>
<rect x="374.24" y="451.71" width="21.89" height="21.79" fill="#040505"/>
<rect x="396.13" y="451.71" width="21.89" height="21.79" fill="#040505"/>
<rect x="418.02" y="451.71" width="21.89" height="21.79" fill="#060608"/>
<rect x="439.91" y="451.71" width="21.89" height="21.79" fill="#050507"/>
<rect x="461.80" y="451.71" width="21.89" height="21.79" fill="#04040a"/>
<rect x="483.69" y="451.71" width="21.89" height="21.79" fill="#06040a"/>
<rect x="505.58" y="451.71" width="21.89" height="21.79" fill="#04040a"/>
<rect x="527.47" y="451.71" width="21.89" height="21.79" fill="#04060c"/>
<rect x="549.36" y="451.71" width="21.89" height="21.79" fill="#04060a"/>
<rect x="571.25" y="451.71" width="21.89" height="21.79" fill="#10181c"/>
<rect x="593.14" y="451.71" width="21.89" height="21.79" fill="#050706"/>
<rect x="615.03" y="451.71" width="21.89" height="21.79" fill="#222418"/>
<rect x="636.92" y="451.71" width="21.89" height="21.79" fill="#0a0a08"/>
<rect x="658.81" y="451.71" width="11.69" height="21.79" fill="#040606"/>
</g></svg>
<!-- crop / frame outlines -->
<svg class="a" style="left:0;top:0" width="837" height="500" viewBox="0 0 837 500" shape-rendering="crispEdges">
<g fill="#f00000"><rect x="24" y="23" width="56" height="1"/><rect x="24" y="23" width="1" height="451"/><rect x="24" y="473" width="647" height="1"/><rect x="670" y="431" width="1" height="43"/>
<rect x="22" y="22" width="4" height="4"/><rect x="22" y="472" width="4" height="4"/><rect x="668" y="472" width="4" height="4"/></g>
<g fill="#00fa00"><rect x="80" y="23" width="591" height="1"/><rect x="80" y="23" width="1" height="409"/><rect x="670" y="23" width="1" height="409"/><rect x="80" y="431" width="591" height="1"/>
<rect x="78" y="22" width="4" height="4"/><rect x="668" y="22" width="4" height="4"/><rect x="78" y="430" width="4" height="4"/><rect x="668" y="430" width="4" height="4"/></g>
</svg>

<!-- tool panel -->
<div class="a" style="left:0;top:525px;width:837px;height:1.5px;background:#060606"></div>
<div class="a" style="left:0;top:526.3px;width:837px;height:38.5px;background:#2d2d2d"></div>
<div class="a" style="left:0;top:564.6px;width:837px;height:2.1px;background:#474747"></div>
<div class="a" style="left:0;top:566.7px;width:837px;height:71px;background:#1e1e1e"></div>

<div class="b blue" style="left:152px;top:532px;width:63px;height:28px"></div>
<span class="t" style="left:158.5px;top:538px;color:#a9aeb6">Icons On</span>
<div class="b" style="left:218px;top:532px;width:63px;height:28px;background:#4a4a4a"></div>
<div class="a" style="left:272px;top:532px;width:9px;height:28px;background:#3a6ab4;border-radius:0 2px 2px 0"></div>
<span class="t" style="left:224px;top:538px;color:#d2d2d2;font-style:italic">Axis</span>
<div class="b blue" style="left:284px;top:532px;width:63px;height:28px"></div>
<span class="t" style="left:290px;top:538px;color:#a9aeb6">World</span>
<div class="b gray" style="left:350px;top:532px;width:63px;height:28px"></div>
<div class="a" style="left:403px;top:532px;width:10px;height:28px;background:#2d3748;border-radius:0 2px 2px 0"></div>
<span class="t" style="left:356px;top:538px;color:#a4a4a4;letter-spacing:-0.4px">Z Occ</span>
<span class="t" style="left:415px;top:538px;color:#b4b4b4">Tools</span>
<div class="b blue" style="left:451px;top:532px;width:140px;height:28px"></div>
<svg style="left:0;top:0" width="837" height="783" viewBox="0 0 837 783"><path d="M464.1 538.1L464.1 551.3L467.2 548.7L470 554.1L472.8 552.9L470.3 547.5L474.5 547.1Z" fill="#b0b0b0"/></svg>
<span class="t" style="left:488px;top:538px;color:#a9aeb6">Select</span>
<div class="b blue" style="left:601px;top:532px;width:41px;height:28px"></div>
<div class="a" style="left:612px;top:539.8px;width:17.2px;height:11.2px;border:1px solid #c8c8c8;box-sizing:content-box"></div>
<div class="b gray" style="left:652px;top:532px;width:27px;height:28px"></div>
<svg style="left:0;top:0" width="837" height="783" viewBox="0 0 837 783"><circle cx="663.7" cy="544.5" r="5.9" fill="none" stroke="#5a5a5a" stroke-width="1.5"/><path d="M668.3 549.2L672.6 553.5" stroke="#5a5a5a" stroke-width="2.2" stroke-linecap="round"/></svg>
<div class="b slate" style="left:709px;top:532px;width:50px;height:28px;border-radius:2px 0 0 2px"></div>
<div class="a" style="left:709px;top:555.7px;width:50px;height:3.8px;background:#29313d"></div>
<div class="a" style="left:711px;top:555.5px;width:2.5px;height:4.5px;background:#7a828c"></div>
<span class="t" style="left:720px;top:535px;color:#a9aeb6;letter-spacing:0.6px">34%</span>
<div class="b blue" style="left:760px;top:532px;width:19px;height:28px;border-radius:0 2px 2px 0"></div>
<svg style="left:0;top:0" width="837" height="783" viewBox="0 0 837 783"><path d="M764.6 543.9H774.4L769.5 549.2Z" fill="#c0c0c0"/></svg>
<div class="b gray" style="left:782px;top:532px;width:28px;height:28px"></div>
<svg style="left:0;top:0" width="837" height="783" viewBox="0 0 837 783"><g fill="none" stroke="#8a8a8a" stroke-width="2.3"><rect x="-5.4" y="-3" width="10.8" height="6" rx="3" transform="translate(799.2,542.9) rotate(-45)"/><rect x="-5.4" y="-3" width="10.8" height="6" rx="3" transform="translate(792.9,549.2) rotate(-45)"/></g></svg>
<div class="b gray" style="left:813px;top:532px;width:30px;height:28px"></div>
<svg style="left:0;top:0" width="837" height="783" viewBox="0 0 837 783"><path d="M818 547.3L826 538.2L829.2 541.8V538.2H831.2V544.1L834 547.3H832.5V553H827.7V547.8H824.4V553H819.6V547.3Z" fill="#c4c4c4"/></svg>

<!-- transport row -->
<div class="a" style="left:0;top:569.6px;width:438px;height:28.6px;background:#383838;border-radius:0 2px 2px 0"></div>
<div class="a" style="left:0;top:604.4px;width:438px;height:27.8px;background:#555555;border-radius:0 2px 2px 0"></div>
<svg style="left:0;top:569px" width="438" height="30" viewBox="0 0 438 30">
<g fill="#a8a8a8">
<path d="M13.9 9H18.2V10.5H15.5V19.5H18.2V21H13.9Z"/>
<path d="M18.9 15L27.7 9.7V12.7H32.2V17.3H27.7V20.3Z"/>
<rect x="58.6" y="9" width="1.4" height="9"/><rect x="56.9" y="17.4" width="5" height="3.8"/>
<path d="M63 15L71.8 9.7V12.7H76.3V17.3H71.8V20.3Z"/>
<path d="M100.8 15L110.4 9.6V20.4Z"/><rect x="112.8" y="10.2" width="2.8" height="9.8"/><rect x="117.4" y="10.2" width="2.8" height="9.8"/>
<path d="M171.2 9.6L180.2 15L171.2 20.4Z"/>
<path d="M215.8 22L215.8 25.8L212 25.8Z" fill="#787878"/>
<rect x="229.8" y="10.2" width="2.7" height="9.8"/><rect x="234.3" y="10.2" width="2.7" height="9.8"/><path d="M239.9 9.6L249.3 15L239.9 20.4Z"/>
<path d="M273.9 12.7H278.2V9.7L287.09999999999997 15L278.2 20.3V17.3H273.9Z"/>
<rect x="289.9" y="9" width="1.4" height="9"/><rect x="288" y="17.4" width="5" height="3.8"/>
<path d="M319 12.7H323.3V9.7L332.2 15L323.3 20.3V17.3H319Z"/>
<path d="M337.2 9H332.9V10.5H335.6V19.5H332.9V21H337.2Z"/>
<path d="M362 12.7H366.3V9.7L375.2 15L366.3 20.3V17.3H362Z"/>
<rect x="377.8" y="9" width="1.4" height="8"/><path d="M378.5 15.8L382 21.2H375Z"/>
<path d="M405.8 12.7H410.1V9.7L419.0 15L410.1 20.3V17.3H405.8Z"/>
<rect x="420.1" y="10.2" width="2.6" height="9.8"/><rect x="423.8" y="10.2" width="2.6" height="9.8"/>
</g></svg>

<div class="b blue" style="left:441.5px;top:570px;width:84.5px;height:28px"></div>
<span class="t" style="left:447.5px;top:575.7px;color:#a9aeb6">Options</span>
<svg style="left:510.5px;top:580.5px" width="11" height="7" viewBox="0 0 11 7"><path d="M0.3 0.3H10.3L5.3 6.2Z" fill="#c8c8c8"/></svg>
<div class="b slate" style="left:441.5px;top:604.4px;width:84.5px;height:27.8px"></div>
<div class="a" style="left:441.5px;top:627.8px;width:84.5px;height:3.8px;background:#29313d"></div>
<div class="a" style="left:442.5px;top:627.4px;width:2.5px;height:4.6px;background:#7a828c"></div>
<span class="t" style="left:474.5px;top:606.5px;color:#a9aeb6;letter-spacing:0.6px">36</span>
<span class="t" style="left:517.5px;top:604.8px;color:#b8bcc2">*</span>

<span class="t" style="left:553.5px;top:575.7px;color:#b4b4b4">Node</span>
<span class="t" style="left:553.5px;top:609.3px;color:#b4b4b4">Object</span>
<div class="b slate" style="left:595px;top:570px;width:217px;height:28px"></div>
<span class="t" style="left:601px;top:575.7px;color:#a9aeb6">action2</span>
<div class="b slate" style="left:595px;top:604.4px;width:151px;height:27.8px"></div>
<span class="t" style="left:601px;top:609.3px;color:#a9aeb6">surface1</span>
<div class="b gray" style="left:815px;top:570px;width:30px;height:28px"></div>
<span class="t" style="left:822.5px;top:575.7px;color:#b4b4b4">Load</span>
<div class="b gray" style="left:749px;top:604.4px;width:30px;height:27.8px"></div>
<div class="b gray" style="left:782px;top:604.4px;width:30px;height:27.8px"></div>
<svg style="left:0;top:0" width="837" height="783" viewBox="0 0 837 783"><g fill="#b0b0b0"><rect x="754.8" y="611.6" width="2.4" height="12.6"/><path d="M758.5 617.9L767.8 612.5V615.5H772.2V620.4H767.8V623.3Z"/><path d="M787.9 615.5H792.4V612.5L801.5 617.9L792.4 623.3V620.4H787.9Z"/><rect x="802.8" y="611.6" width="2.4" height="12.6"/></g></svg>
<div class="b" style="left:815px;top:604.4px;width:30px;height:27.8px;background:#333333"></div>
<span class="t" style="left:827px;top:609.3px;color:#5c5c5c">Prev</span>

<!-- table -->
<div class="a" style="left:0;top:637.5px;width:837px;height:23.5px;background:#141618"></div>
<div class="a" style="left:0;top:661px;width:837px;height:22.5px;background:#232323"></div>
<div class="a" style="left:0;top:683.7px;width:837px;height:1.3px;background:#d09c1c"></div>
<div class="a" style="left:0;top:685px;width:837px;height:45.5px;background:#5c5c5c"></div>
<div class="a" style="left:0;top:730.8px;width:837px;height:1.3px;background:#d09c1c"></div>
<svg style="left:0;top:637px" width="837" height="96" viewBox="0 637 837 96" shape-rendering="crispEdges">
<g stroke="#151515" stroke-width="1.3" fill="none">
<path d="M243.5 661V683.4M280.4 661V683.4M317.4 661V683.4M354.4 661V683.4M392.4 661V683.4M450.5 661V683.4M508.4 661V683.4M545.6 661V683.4M582.6 661V683.4M619.8 661V683.4M667.6 661V683.4M725.7 661V683.4M783.4 661V683.4"/>
</g>
<g stroke="#121212" stroke-width="1.3" fill="none">
<path d="M243.5 685V730.4M280.4 685V730.4M317.4 685V730.4M354.4 685V730.4M392.4 685V730.4M450.5 685V730.4M508.4 685V730.4M545.6 685V730.4M582.6 685V730.4M619.8 685V730.4M667.6 685V730.4M725.7 685V730.4M783.4 685V730.4"/>
<path d="M0 707.5H243.5M280.4 707.5H317.4M392.4 707.5H582.6"/>
</g>
</svg>
<span class="t" style="left:251.7px;top:639.8px;color:#b4b4b4">Lock</span>
<span class="t" style="left:288.6px;top:639.8px;color:#b4b4b4">Slip</span>
<span class="t" style="left:325.6px;top:639.8px;color:#b4b4b4">MK</span>
<span class="t" style="left:362.6px;top:639.8px;color:#b4b4b4">Blur</span>
<span class="t" style="left:400.6px;top:639.8px;color:#b4b4b4">X Blur</span>
<span class="t" style="left:458.7px;top:639.8px;color:#b4b4b4">Y Blur</span>
<span class="t" style="left:516.6px;top:639.8px;color:#b4b4b4;letter-spacing:-0.6px">CC</span>
<span class="t" style="left:553.8px;top:639.8px;color:#b4b4b4;letter-spacing:-0.5px">CW</span>
<span class="t" style="left:590.8px;top:639.8px;color:#b4b4b4">Div</span>
<span class="t" style="left:628.0px;top:639.8px;color:#b4b4b4">Crop</span>
<span class="t" style="left:675.8px;top:639.8px;color:#b4b4b4">Top</span>
<span class="t" style="left:733.9px;top:639.8px;color:#b4b4b4">Bottom</span>
<span class="t" style="left:791.6px;top:639.8px;color:#b4b4b4">Left</span>
<span class="t" style="left:251.7px;top:663px;color:#9c9c9c">Off</span>
<span class="t" style="left:288.6px;top:663px;color:#9c9c9c;letter-spacing:0.6px">0</span>
<span class="t" style="left:400.6px;top:663px;color:#9c9c9c;letter-spacing:0.6px">0.00</span>
<span class="t" style="left:458.7px;top:663px;color:#9c9c9c;letter-spacing:0.6px">0.00</span>
<span class="t" style="left:675.8px;top:663px;color:#9c9c9c;letter-spacing:0.6px">0</span>
<span class="t" style="left:733.9px;top:663px;color:#9c9c9c;letter-spacing:0.6px">0</span>
<span class="t" style="left:791.6px;top:663px;color:#9c9c9c;letter-spacing:0.6px">0</span>
<span class="t" style="left:288.6px;top:686.8px;color:#d2d2d2;letter-spacing:0.6px">0</span>
<span class="t" style="left:288.6px;top:711px;color:#d2d2d2;letter-spacing:0.6px">0</span>
<span class="t" style="left:400.6px;top:686.8px;color:#d2d2d2;letter-spacing:0.6px">0.00</span>
<span class="t" style="left:400.6px;top:711px;color:#d2d2d2;letter-spacing:0.6px">0.00</span>
<span class="t" style="left:458.7px;top:686.8px;color:#d2d2d2;letter-spacing:0.6px">0.00</span>
<span class="t" style="left:458.7px;top:711px;color:#d2d2d2;letter-spacing:0.6px">0.00</span>
<span class="t" style="left:628.0px;top:686.8px;color:#d2d2d2">C</span>
<span class="t" style="left:628.0px;top:711px;color:#d2d2d2">S</span>
<span class="t" style="left:675.8px;top:686.8px;color:#d2d2d2;letter-spacing:0.6px">0</span>
<span class="t" style="left:675.8px;top:711px;color:#d2d2d2;letter-spacing:0.6px">0</span>
<span class="t" style="left:733.9px;top:686.8px;color:#d2d2d2;letter-spacing:0.6px">0</span>
<span class="t" style="left:733.9px;top:711px;color:#d2d2d2;letter-spacing:0.6px">123</span>
<span class="t" style="left:791.6px;top:686.8px;color:#d2d2d2;letter-spacing:0.6px">0</span>
<span class="t" style="left:791.6px;top:711px;color:#d2d2d2;letter-spacing:0.6px">169</span>
<span class="t" style="left:251.7px;top:698.8px;color:#d2d2d2">Off</span>
<span class="t tr" style="right:604px;top:686.8px;color:#d2d2d2">#1</span>
<svg style="left:644px;top:690.5px" width="12" height="10" viewBox="0 0 12 10"><path d="M1.2 5.2L4.4 8.2L10.6 1.4" fill="none" stroke="#ffffff" stroke-width="2"/></svg>
<svg style="left:644px;top:714.5px" width="12" height="10" viewBox="0 0 12 10"><path d="M1.2 5.2L4.4 8.2L10.6 1.4" fill="none" stroke="#ffffff" stroke-width="2"/></svg>

</body></html>
